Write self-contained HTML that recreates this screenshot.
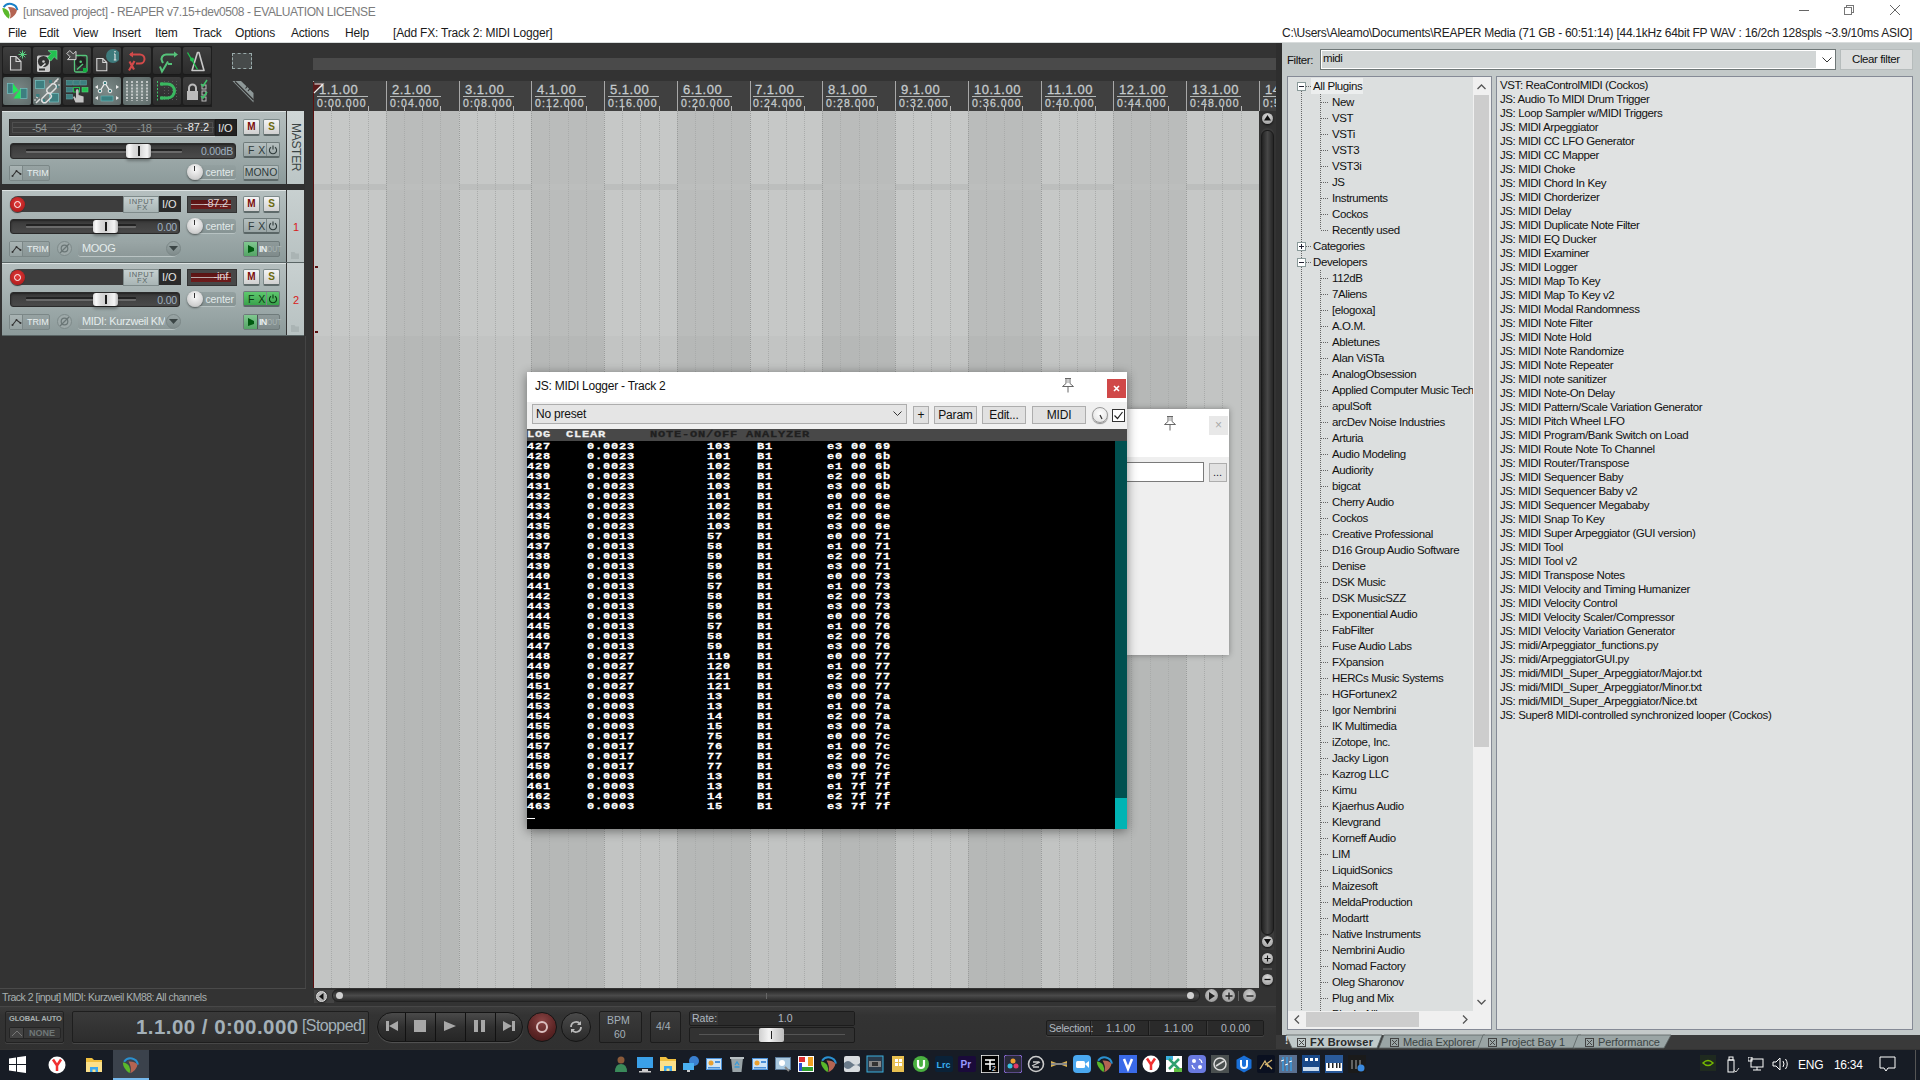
<!DOCTYPE html>
<html><head><meta charset="utf-8">
<style>
*{margin:0;padding:0;box-sizing:border-box}
html,body{width:1920px;height:1080px;overflow:hidden;background:#333;font-family:"Liberation Sans",sans-serif;position:relative}
div,span,svg{position:absolute}
.t{white-space:nowrap;line-height:1}

</style></head><body>
<div style="left:0;top:0;width:1920px;height:43px;background:#fff"></div><div style="left:0;top:42px;width:1920px;height:1px;background:#d8dcdc"></div><svg style="left:0;top:0" width="22" height="22" viewBox="0 0 22 22">
<path d="M3.6 7.2 A7.6 7.6 0 0 1 17.4 10.2" stroke="#1a80c8" stroke-width="2" fill="none"/>
<path d="M2.3 8 Q2.8 14.5 9 18.8 Q10.6 15 8.6 11.5 Q5.8 7.8 2.3 8 Z" fill="#5ab82a"/>
<path d="M8 7 Q14 6.6 17 10.2 Q16 15.5 9.8 18.8 Q11.8 13 8 7Z" fill="#b46452"/>
</svg><div class="t" style="left:23px;top:6px;font-size:12px;color:#7c7c7c;letter-spacing:-0.4px">[unsaved project] - REAPER v7.15+dev0508 - EVALUATION LICENSE</div><div style="left:1799px;top:10px;width:10px;height:1px;background:#666"></div><div style="left:1846px;top:5px;width:8px;height:8px;border:1px solid #777"></div><div style="left:1844px;top:7px;width:8px;height:8px;border:1px solid #777;background:#fff"></div><svg style="left:1890px;top:5px" width="10" height="10"><path d="M0 0L10 10M10 0L0 10" stroke="#666" stroke-width="1"/></svg><div class="t" style="left:8px;top:27px;font-size:12px;color:#1a1a1a;letter-spacing:-0.2px">File</div><div class="t" style="left:39px;top:27px;font-size:12px;color:#1a1a1a;letter-spacing:-0.2px">Edit</div><div class="t" style="left:73px;top:27px;font-size:12px;color:#1a1a1a;letter-spacing:-0.2px">View</div><div class="t" style="left:112px;top:27px;font-size:12px;color:#1a1a1a;letter-spacing:-0.2px">Insert</div><div class="t" style="left:155px;top:27px;font-size:12px;color:#1a1a1a;letter-spacing:-0.2px">Item</div><div class="t" style="left:193px;top:27px;font-size:12px;color:#1a1a1a;letter-spacing:-0.2px">Track</div><div class="t" style="left:235px;top:27px;font-size:12px;color:#1a1a1a;letter-spacing:-0.2px">Options</div><div class="t" style="left:291px;top:27px;font-size:12px;color:#1a1a1a;letter-spacing:-0.2px">Actions</div><div class="t" style="left:345px;top:27px;font-size:12px;color:#1a1a1a;letter-spacing:-0.2px">Help</div><div class="t" style="left:393px;top:27px;font-size:12px;color:#1a1a1a;letter-spacing:-0.2px">[Add FX: Track 2: MIDI Logger]</div><div class="t" style="left:1282px;top:27px;font-size:12px;color:#222;letter-spacing:-0.26px">C:\Users\Aleamo\Documents\REAPER Media (71 GB - 60:51:14) [44.1kHz 64bit FP WAV : 16/2ch 128spls ~3.9/10ms ASIO]</div><div style="left:2px;top:46px;width:210px;height:61px;background:#1e1e1e"></div><div style="left:3px;top:47px;width:28px;height:27px;background:linear-gradient(#3e3e3e,#2c2c2c);border-radius:2px;box-shadow:0 1px 0 #1a1a1a"><svg width="28" height="27"><path d="M7.5 9.5h5.5l5 5v8.5H7.5z" fill="#474747" stroke="#d4d4d4" stroke-width="1.1"/><path d="M13 9.5v5h5" fill="none" stroke="#d4d4d4" stroke-width="1.1"/><g stroke="#5ad080" stroke-width="1"><path d="M19.5 3.5v8M15.5 7.5h8M16.7 4.7l5.6 5.6M22.3 4.7l-5.6 5.6"/></g><circle cx="19.5" cy="7.5" r="1.5" fill="#5ad080"/></svg></div><div style="left:33px;top:47px;width:28px;height:27px;background:linear-gradient(#3e3e3e,#2c2c2c);border-radius:2px;box-shadow:0 1px 0 #1a1a1a"><svg width="28" height="27"><rect x="4" y="8.5" width="13" height="16.5" rx="1.5" fill="#c8c8c8"/><circle cx="10.5" cy="14.5" r="5.6" fill="#333"/><circle cx="10.5" cy="14.5" r="1.3" fill="#ccc"/><path d="M6.5 22l6-5.5" stroke="#ddd" stroke-width="1.6"/><rect x="6" y="21.5" width="6" height="2" fill="#333"/><path d="M15 3.5H24V12.5L21.3 9.8L17.8 14L14.3 10.8L18.2 6.3Z" fill="#22c050" stroke="#7ad89a" stroke-width=".6"/></svg></div><div style="left:63px;top:47px;width:28px;height:27px;background:linear-gradient(#3e3e3e,#2c2c2c);border-radius:2px;box-shadow:0 1px 0 #1a1a1a"><svg width="28" height="27"><rect x="11.5" y="8.5" width="12.5" height="16.5" rx="1.5" fill="#333" stroke="#55c57a" stroke-width="1.3"/><circle cx="17.7" cy="14.8" r="5.3" fill="#222"/><circle cx="17.7" cy="14.8" r="1.3" fill="#55c57a"/><path d="M14 22.5l6-5.5" stroke="#55c57a" stroke-width="1.4"/><path d="M20 21h4v4h-4z" fill="#12b040"/><path d="M13 4.3V12.6H4.5L7.2 9.9L3.8 6.5L6.8 3.5L10.2 6.9Z" fill="#4a4a4a" stroke="#d0d0d0" stroke-width="1"/></svg></div><div style="left:93px;top:47px;width:28px;height:27px;background:linear-gradient(#3e3e3e,#2c2c2c);border-radius:2px;box-shadow:0 1px 0 #1a1a1a"><svg width="28" height="27"><defs><clipPath id="ci"><rect x="0" y="2" width="26" height="25"/></clipPath></defs><circle cx="20" cy="9" r="7" fill="#3e7a7c" clip-path="url(#ci)"/><path d="M22 7v6M20.8 13h2.6M21 7h1" stroke="#e8e8e8" stroke-width="1.1"/><circle cx="22" cy="4.8" r=".8" fill="#e8e8e8"/><path d="M3.8 11.5h6l4 4v8.2H3.8z" fill="#474747" stroke="#d4d4d4" stroke-width="1.1"/><path d="M9.8 11.5v4h4" fill="none" stroke="#d4d4d4" stroke-width="1.1"/></svg></div><div style="left:123px;top:47px;width:28px;height:27px;background:linear-gradient(#3e3e3e,#2c2c2c);border-radius:2px;box-shadow:0 1px 0 #1a1a1a"><svg width="28" height="27"><path d="M7 7.5h10a4.5 4.5 0 0 1 0 9h-4" stroke="#d24a4a" stroke-width="2" fill="none"/><path d="M10 4.5L6 7.5L10 10.5z" fill="#d24a4a"/><path d="M6 23.5l5.5-9.5M6.5 14.5l4.5 8" stroke="#d24a4a" stroke-width="2.2"/></svg></div><div style="left:153px;top:47px;width:28px;height:27px;background:linear-gradient(#3e3e3e,#2c2c2c);border-radius:2px;box-shadow:0 1px 0 #1a1a1a"><svg width="28" height="27"><path d="M22 7.5H13a4.5 4.5 0 0 0-4 6.5l1 2" stroke="#55c27a" stroke-width="2" fill="none"/><path d="M21 4.5L25 7.5L21 10.5z" fill="#55c27a"/><path d="M7 19.5l2 5 6-10M15 17h4" stroke="#55c27a" stroke-width="2" fill="none"/></svg></div><div style="left:183px;top:47px;width:28px;height:27px;background:linear-gradient(#3e3e3e,#2c2c2c);border-radius:2px;box-shadow:0 1px 0 #1a1a1a"><svg width="28" height="27"><path d="M14.5 5.5h1.5l5 18h-12z" fill="none" stroke="#c8c8c8" stroke-width="1.6" stroke-linejoin="round"/><path d="M4.5 5.5l10 17" stroke="#22c050" stroke-width="1.3"/><circle cx="9" cy="12.5" r="2" fill="#22c050"/></svg></div><div style="left:3px;top:77px;width:28px;height:28px;background:radial-gradient(#7c8a88,#5f6b6a);border-radius:2px;box-shadow:0 1px 0 #1a1a1a"><svg width="28" height="28"><rect x="4.5" y="6.5" width="5.5" height="10" fill="#3d7f80" stroke="#76c0c0" stroke-width=".7"/><rect x="17.5" y="11.5" width="6.5" height="10" fill="#3d7f80" stroke="#76c0c0" stroke-width=".7"/><path d="M10 6.5L15.5 13.5L10 16.5Z" fill="#22e858"/><path d="M17.5 11.5V21.5H10.5Z" fill="#22e858"/></svg></div><div style="left:33px;top:77px;width:28px;height:28px;background:radial-gradient(#7c8a88,#5f6b6a);border-radius:2px;box-shadow:0 1px 0 #1a1a1a"><svg width="28" height="28"><rect x="2.5" y="3.5" width="9" height="8" fill="#3d7f80" stroke="#76c0c0" stroke-width=".7"/><rect x="16.5" y="16.5" width="9" height="8.5" fill="#3d7f80" stroke="#76c0c0" stroke-width=".7"/><rect x="16" y="3" width="3" height="3" fill="#3d7f80"/><rect x="22" y="8" width="3.5" height="3" fill="#3d7f80"/><rect x="3" y="17" width="3.5" height="3" fill="#3d7f80"/><rect x="9" y="22" width="3" height="3" fill="#3d7f80"/><g fill="none" stroke="#e0e0e0" stroke-width="1.5"><path d="M9 21.5l5-5a3 3 0 0 1 4 4l-5 5a3 3 0 0 1-4-4z"/><path d="M14 12l5-5a3 3 0 0 1 4 4l-5 5a3 3 0 0 1-4-4z"/><path d="M3 26l4-4M21 6l4.5-4.5"/></g><path d="M3 20l2 1M23 3l1 2M1 23l2 0M25 8l2 0" stroke="#ddd"/></svg></div><div style="left:63px;top:77px;width:28px;height:28px;background:linear-gradient(#3e3e3e,#2c2c2c);border-radius:2px;box-shadow:0 1px 0 #1a1a1a"><svg width="28" height="28"><g fill="#3d7f80" stroke="#5aa0a0" stroke-width=".6"><rect x="3.5" y="3.5" width="6" height="4.5"/><rect x="10.5" y="3.5" width="6" height="4.5"/><rect x="17.5" y="3.5" width="6" height="4.5"/><rect x="3.5" y="10.5" width="6" height="4.5"/><rect x="3.5" y="17.5" width="6" height="4.5"/></g><rect x="10.5" y="10.5" width="6" height="4.5" fill="none" stroke="#22c050"/><rect x="19" y="10.5" width="6" height="4.5" fill="#22c050" stroke="#5ad080" stroke-width=".6"/><path d="M12.5 25.5l-2.5-5.5 1.5-.8 1.5 2.3V13.5a1.3 1.3 0 0 1 2.6 0V18l5 1.5V25.5z" fill="#c4c4c4"/></svg></div><div style="left:93px;top:77px;width:28px;height:28px;background:radial-gradient(#7c8a88,#5f6b6a);border-radius:2px;box-shadow:0 1px 0 #1a1a1a"><svg width="28" height="28"><path d="M7 14l5-8 5 8" stroke="#eee" fill="none" stroke-width="1.3"/><circle cx="7" cy="14" r="1.8" fill="#3d7f80" stroke="#eee"/><circle cx="12" cy="6" r="1.8" fill="#3d7f80" stroke="#eee"/><circle cx="17" cy="14" r="1.8" fill="#3d7f80" stroke="#eee"/><rect x="8" y="19" width="12" height="5" fill="#3d7f80" stroke="#6bb" stroke-width=".6"/><path d="M2 10l3-2v4zM26 10l-3-2v4zM2 21l3-2v4zM26 21l-3-2v4z" fill="#eee"/></svg></div><div style="left:123px;top:77px;width:28px;height:28px;background:radial-gradient(#7c8a88,#5f6b6a);border-radius:2px;box-shadow:0 1px 0 #1a1a1a"><svg width="28" height="28"><g stroke="#eee" stroke-width="1.3" stroke-dasharray="2 1.2"><path d="M4 4v20M9 4v20M14 4v20M19 4v20M24 4v20"/></g></svg></div><div style="left:153px;top:77px;width:28px;height:28px;background:linear-gradient(#3e3e3e,#2c2c2c);border-radius:2px;box-shadow:0 1px 0 #1a1a1a"><svg width="28" height="28"><g stroke="#5a5a5a" stroke-dasharray="1 2"><path d="M11.5 4v20M15.5 4v20M19.5 4v20M23.5 4v20"/></g><path d="M4.5 4v20" stroke="#3fc46a" stroke-dasharray="2 1.5"/><path d="M8 7h6.5a7 7 0 0 1 0 14H8" stroke="#3ab860" stroke-width="3" fill="none"/><path d="M7 5.5h3v3H7zM7 19.5h3v3H7z" fill="#3ab860"/></svg></div><div style="left:183px;top:77px;width:28px;height:28px;background:linear-gradient(#3e3e3e,#2c2c2c);border-radius:2px;box-shadow:0 1px 0 #1a1a1a"><svg width="28" height="28"><rect x="4" y="14" width="11" height="9" fill="#bbb"/><path d="M6 14v-3a3.5 3.5 0 0 1 7 0v3" stroke="#bbb" stroke-width="2" fill="none"/><rect x="19" y="8" width="4" height="4" fill="none" stroke="#bbb"/><rect x="19" y="14" width="4" height="4" fill="none" stroke="#bbb"/><rect x="19" y="20" width="4" height="4" fill="none" stroke="#bbb"/><path d="M18 7l2 2 4-6M18 19l2 2 4-6" stroke="#3fc46a" stroke-width="1.5" fill="none"/></svg></div><div style="left:232px;top:53px;width:20px;height:16px;background:#474b4b;border:1px dashed #9aa"></div><svg style="left:231px;top:80px" width="24" height="24"><path d="M1.5 1H10L22.5 13V22.5Z" fill="#8e9898"/><path d="M4 1.5L22.5 20" stroke="#333" stroke-width="1.4"/><path d="M16.5 6l-2 2.5M19 8.5l-2 2.5" stroke="#333" stroke-width="1.2"/></svg><div style="left:2px;top:111px;width:284px;height:73px;background:linear-gradient(#dde3e3 0,#dde3e3 1px,#b5bfbf 1px,#a2aeae 50%,#8c9a9a);"></div><div style="left:287px;top:111px;width:17px;height:73px;background:linear-gradient(#cfd6d6,#bcc6c6);"></div><div class="t" style="left:302px;top:123px;font-size:12px;color:#3a4444;transform:rotate(90deg);transform-origin:0 0;letter-spacing:-.3px">MASTER</div><div style="left:9px;top:119px;width:206px;height:17px;background:#3b3b3b;border:1px solid #2a2a2a;box-shadow:0 1px 0 #c8d0d0"></div><div style="left:12px;top:122px;width:201px;height:11px;background:transparent;border:1px solid #4e4e4e"></div><div style="left:13px;top:127px;width:201px;height:1px;background:#555;"></div><div class="t" style="left:32px;top:123px;font-size:11px;color:#8e9494;letter-spacing:-.5px">-54</div><div class="t" style="left:67px;top:123px;font-size:11px;color:#8e9494;letter-spacing:-.5px">-42</div><div class="t" style="left:102px;top:123px;font-size:11px;color:#8e9494;letter-spacing:-.5px">-30</div><div class="t" style="left:137px;top:123px;font-size:11px;color:#8e9494;letter-spacing:-.5px">-18</div><div class="t" style="left:173px;top:123px;font-size:11px;color:#8e9494;letter-spacing:-.5px">-6</div><div class="t" style="left:184px;top:122px;font-size:11px;color:#e8e8e8;">-87.2</div><div style="left:215px;top:119px;width:22px;height:17px;background:#222;border:1px solid #1a1a1a"></div><div class="t" style="left:218px;top:123px;font-size:11px;color:#e6e6e6;">I/O</div><div style="left:243px;top:119px;width:17px;height:17px;background:linear-gradient(#f4f4f4,#d0d0d0);border:1px solid #7d8a8a;border-bottom:2px solid #5e6a6a;border-radius:2px;color:#7a0c0c;font-size:10px;font-weight:bold;text-align:center;line-height:14px">M</div><div style="left:263px;top:119px;width:17px;height:17px;background:linear-gradient(#f4f4f4,#d0d0d0);border:1px solid #7d8a8a;border-bottom:2px solid #5e6a6a;border-radius:2px;color:#6b6a10;font-size:10px;font-weight:bold;text-align:center;line-height:14px">S</div><div style="left:10px;top:143px;width:226px;height:16px;background:linear-gradient(#3a3a3a,#4a4a4a);border:1px solid #2a2a2a;border-radius:3px;box-shadow:inset 0 1px 2px #222"></div><div style="left:26px;top:149px;width:156px;height:4px;background:#222;border-radius:1px;border-bottom:2px solid #6a6a6a"></div><div style="left:126px;top:144px;width:25px;height:14px;background:linear-gradient(90deg,#d8d8d8,#fafafa 12%,#dcdcdc 30%,#cfcfcf 50%,#e6e6e6 70%,#f4f4f4 85%,#b8b8b8);border-radius:3px;box-shadow:0 3px 3px rgba(0,0,0,.3)"></div><div style="left:138px;top:146px;width:2px;height:10px;background:#1a1a1a;"></div><div class="t" style="left:10px;top:146px;width:223px;text-align:right;font-size:10.5px;color:#9fb0c0;letter-spacing:-.2px">0.00dB</div><div style="left:243px;top:142px;width:37px;height:16px;background:linear-gradient(#b6c0c0,#9aa6a6);border:1px solid #6f7b7b;border-bottom:2px solid #5a6666;border-radius:2px"></div><div style="left:266px;top:143px;width:1px;height:13px;background:#7b8787;"></div><div class="t" style="left:248px;top:145px;font-size:10.5px;color:#2f3b3b;letter-spacing:.5px">F X</div><svg style="left:268px;top:145px" width="10" height="10"><path d="M3 2.2A3.6 3.6 0 1 0 7 2.2M5 0.5v4" stroke="#2f3b3b" fill="none" stroke-width="1.1"/></svg><div style="left:9px;top:165px;width:41px;height:16px;background:linear-gradient(#97a3a3,#8a9696);border:1px solid #7b8787;border-radius:2px"></div><div style="left:10px;top:166px;width:13px;height:14px;background:linear-gradient(#a9b4b4,#96a2a2);border-right:1px solid #7b8787"></div><svg style="left:11px;top:167px" width="11" height="11"><path d="M1.5 9l4-5 4 3" stroke="#333" fill="none" stroke-width="1.1"/><circle cx="1.5" cy="9" r="1" fill="#333"/><circle cx="5.5" cy="4" r="1" fill="#333"/><circle cx="9.5" cy="7" r="1" fill="#333"/></svg><div class="t" style="left:27px;top:169px;font-size:9px;color:#e8eeee;letter-spacing:-.1px">TRIM</div><div style="left:195px;top:165px;width:41px;height:15px;background:linear-gradient(#93a0a0,#879494);border-radius:3px;border-bottom:1px solid #b7c2c2"></div><div style="left:187px;top:164px;width:16px;height:16px;border-radius:50%;background:radial-gradient(circle at 50% 35%,#fafafa,#cfcfcf 70%,#a0a0a0);box-shadow:0 1px 2px rgba(0,0,0,.5)"></div><div style="left:194px;top:166px;width:1px;height:5px;background:#333;"></div><div class="t" style="left:187px;top:167px;width:47px;text-align:right;font-size:10.5px;color:#e2eaea;letter-spacing:-.1px">center</div><div style="left:243px;top:165px;width:36px;height:16px;background:linear-gradient(#b6c0c0,#9aa6a6);border:1px solid #7d8a8a;border-bottom:2px solid #5e6a6a;border-radius:2px;color:#2f3b3b;font-size:10.5px;font-weight:normal;text-align:center;line-height:13px">MONO</div><div style="left:0px;top:184px;width:305px;height:6px;background:#303030;"></div><div style="left:2px;top:190px;width:284px;height:72px;background:linear-gradient(#dde3e3 0,#dde3e3 1px,#b5bfbf 1px,#a2aeae 50%,#8c9a9a);"></div><div style="left:287px;top:190px;width:17px;height:72px;background:linear-gradient(#c8d0d0,#b8c2c2);"></div><div style="left:2px;top:262px;width:302px;height:1px;background:#5a6565;"></div><div style="left:10px;top:196px;width:171px;height:16px;background:#3d3d3d;border-radius:8px 0 0 8px"></div><div style="left:10px;top:197px;width:15px;height:15px;border-radius:50%;background:radial-gradient(circle at 50% 40%,#e23a3a,#a31414);box-shadow:0 1px 1px #333"></div><div style="left:14px;top:201px;width:7px;height:7px;border-radius:50%;border:1.5px solid #fff"></div><div style="left:123px;top:196px;width:36px;height:17px;background:linear-gradient(#c6d0d0,#a9b5b5);border:1px solid #7f8b8b"></div><div class="t" style="left:129px;top:198px;font-size:7.5px;color:#5b6767;letter-spacing:.6px">INPUT</div><div class="t" style="left:137px;top:204px;font-size:7.5px;color:#5b6767;letter-spacing:.6px">FX</div><div style="left:159px;top:196px;width:22px;height:16px;background:#2a2a2a;"></div><div class="t" style="left:162px;top:199px;font-size:11px;color:#e6e6e6;">I/O</div><div style="left:187px;top:196px;width:50px;height:17px;background:#474747;border:1px solid #333"></div><div style="left:191px;top:200px;width:40px;height:9px;background:linear-gradient(#5a1414,#6e1c1c);"></div><div style="left:191px;top:204px;width:40px;height:1px;background:#b8a8a8;"></div><div class="t" style="left:188px;top:198px;font-size:11px;color:#e0d0d0;width:40px;text-align:right;letter-spacing:-.2px">-87.2</div><div style="left:243px;top:196px;width:17px;height:17px;background:linear-gradient(#f4f4f4,#d0d0d0);border:1px solid #7d8a8a;border-bottom:2px solid #5e6a6a;border-radius:2px;color:#7a0c0c;font-size:10px;font-weight:bold;text-align:center;line-height:14px">M</div><div style="left:263px;top:196px;width:17px;height:17px;background:linear-gradient(#f4f4f4,#d0d0d0);border:1px solid #7d8a8a;border-bottom:2px solid #5e6a6a;border-radius:2px;color:#6b6a10;font-size:10px;font-weight:bold;text-align:center;line-height:14px">S</div><div style="left:10px;top:219px;width:170px;height:15px;background:linear-gradient(#3a3a3a,#4a4a4a);border:1px solid #2a2a2a;border-radius:3px;box-shadow:inset 0 1px 2px #222"></div><div style="left:26px;top:224px;width:110px;height:4px;background:#222;border-radius:1px;border-bottom:2px solid #6a6a6a"></div><div style="left:93px;top:220px;width:25px;height:13px;background:linear-gradient(90deg,#d8d8d8,#fafafa 12%,#dcdcdc 30%,#cfcfcf 50%,#e6e6e6 70%,#f4f4f4 85%,#b8b8b8);border-radius:3px;box-shadow:0 3px 3px rgba(0,0,0,.3)"></div><div style="left:105px;top:222px;width:2px;height:9px;background:#1a1a1a;"></div><div class="t" style="left:10px;top:222px;width:167px;text-align:right;font-size:10.5px;color:#9fb0c0;letter-spacing:-.2px">0.00</div><div style="left:195px;top:219px;width:41px;height:15px;background:linear-gradient(#93a0a0,#879494);border-radius:3px;border-bottom:1px solid #b7c2c2"></div><div style="left:187px;top:218px;width:16px;height:16px;border-radius:50%;background:radial-gradient(circle at 50% 35%,#fafafa,#cfcfcf 70%,#a0a0a0);box-shadow:0 1px 2px rgba(0,0,0,.5)"></div><div style="left:194px;top:220px;width:1px;height:5px;background:#333;"></div><div class="t" style="left:187px;top:221px;width:47px;text-align:right;font-size:10.5px;color:#e2eaea;letter-spacing:-.1px">center</div><div style="left:243px;top:218px;width:37px;height:16px;background:linear-gradient(#b6c0c0,#9aa6a6);border:1px solid #6f7b7b;border-bottom:2px solid #5a6666;border-radius:2px"></div><div style="left:266px;top:219px;width:1px;height:13px;background:#7b8787;"></div><div class="t" style="left:248px;top:221px;font-size:10.5px;color:#2f3b3b;letter-spacing:.5px">F X</div><svg style="left:268px;top:221px" width="10" height="10"><path d="M3 2.2A3.6 3.6 0 1 0 7 2.2M5 0.5v4" stroke="#2f3b3b" fill="none" stroke-width="1.1"/></svg><div style="left:9px;top:241px;width:41px;height:16px;background:linear-gradient(#97a3a3,#8a9696);border:1px solid #7b8787;border-radius:2px"></div><div style="left:10px;top:242px;width:13px;height:14px;background:linear-gradient(#a9b4b4,#96a2a2);border-right:1px solid #7b8787"></div><svg style="left:11px;top:243px" width="11" height="11"><path d="M1.5 9l4-5 4 3" stroke="#333" fill="none" stroke-width="1.1"/><circle cx="1.5" cy="9" r="1" fill="#333"/><circle cx="5.5" cy="4" r="1" fill="#333"/><circle cx="9.5" cy="7" r="1" fill="#333"/></svg><div class="t" style="left:27px;top:245px;font-size:9px;color:#e8eeee;letter-spacing:-.1px">TRIM</div><div style="left:57px;top:241px;width:15px;height:15px;border-radius:50%;border:1px solid #7d8989;background:#9ea9a9"></div><svg style="left:59px;top:243px" width="11" height="11"><circle cx="5.5" cy="5.5" r="3.3" stroke="#6a7676" fill="none" stroke-width="1.2"/><path d="M1 10L10 1" stroke="#6a7676" stroke-width="1.2"/></svg><div style="left:78px;top:241px;width:102px;height:16px;background:linear-gradient(#9aa6a6,#8c9898);border-radius:3px 8px 8px 3px;border-bottom:1px solid #b9c3c3;overflow:hidden"></div><div style="left:166px;top:241px;width:15px;height:15px;border-radius:50%;background:linear-gradient(#9aa6a6,#7f8b8b);border:1px solid #7b8787"></div><svg style="left:169px;top:246px" width="9" height="6"><path d="M0 0h9L4.5 5z" fill="#3b4545"/></svg><div class="t" style="left:82px;top:243px;width:83px;overflow:hidden;font-size:11px;color:#e4ecec;letter-spacing:-.35px">MOOG</div><div style="left:243px;top:241px;width:37px;height:16px;background:linear-gradient(#8e9a9a,#7f8b8b);border:1px solid #6f7b7b;border-radius:2px"></div><div style="left:244px;top:242px;width:14px;height:14px;background:linear-gradient(#80c890,#55a466);border-right:1px solid #4a5656"></div><svg style="left:248px;top:245px" width="7" height="9"><path d="M0 0L6 3L6 6L0 8z" fill="#005a10"/></svg><div class="t" style="left:259px;top:245px;font-size:9px;color:#e8eeee;font-weight:bold;letter-spacing:-.8px">IN</div><div class="t" style="left:267px;top:245px;font-size:8.5px;color:#a8b4b4;letter-spacing:.1px;transform:scaleX(.8);transform-origin:0 0">OUT</div><div class="t" style="left:293px;top:222px;font-size:11px;color:#d81a1a;">1</div><svg style="left:291px;top:252px" width="9" height="7"><path d="M0 0h3.5l1 1.5H8V7H0z" fill="#aab4b4"/></svg><div style="left:2px;top:263px;width:284px;height:72px;background:linear-gradient(#dde3e3 0,#dde3e3 1px,#b5bfbf 1px,#a2aeae 50%,#8c9a9a);"></div><div style="left:287px;top:263px;width:17px;height:72px;background:linear-gradient(#c8d0d0,#b8c2c2);"></div><div style="left:2px;top:335px;width:302px;height:1px;background:#5a6565;"></div><div style="left:10px;top:269px;width:171px;height:16px;background:#3d3d3d;border-radius:8px 0 0 8px"></div><div style="left:10px;top:270px;width:15px;height:15px;border-radius:50%;background:radial-gradient(circle at 50% 40%,#e23a3a,#a31414);box-shadow:0 1px 1px #333"></div><div style="left:14px;top:274px;width:7px;height:7px;border-radius:50%;border:1.5px solid #fff"></div><div style="left:123px;top:269px;width:36px;height:17px;background:linear-gradient(#c6d0d0,#a9b5b5);border:1px solid #7f8b8b"></div><div class="t" style="left:129px;top:271px;font-size:7.5px;color:#5b6767;letter-spacing:.6px">INPUT</div><div class="t" style="left:137px;top:277px;font-size:7.5px;color:#5b6767;letter-spacing:.6px">FX</div><div style="left:159px;top:269px;width:22px;height:16px;background:#2a2a2a;"></div><div class="t" style="left:162px;top:272px;font-size:11px;color:#e6e6e6;">I/O</div><div style="left:187px;top:269px;width:50px;height:17px;background:#474747;border:1px solid #333"></div><div style="left:191px;top:273px;width:40px;height:9px;background:linear-gradient(#5a1414,#6e1c1c);"></div><div style="left:191px;top:277px;width:40px;height:1px;background:#b8a8a8;"></div><div class="t" style="left:188px;top:271px;font-size:11px;color:#e0d0d0;width:40px;text-align:right;letter-spacing:-.2px">-inf</div><div style="left:243px;top:269px;width:17px;height:17px;background:linear-gradient(#f4f4f4,#d0d0d0);border:1px solid #7d8a8a;border-bottom:2px solid #5e6a6a;border-radius:2px;color:#7a0c0c;font-size:10px;font-weight:bold;text-align:center;line-height:14px">M</div><div style="left:263px;top:269px;width:17px;height:17px;background:linear-gradient(#f4f4f4,#d0d0d0);border:1px solid #7d8a8a;border-bottom:2px solid #5e6a6a;border-radius:2px;color:#6b6a10;font-size:10px;font-weight:bold;text-align:center;line-height:14px">S</div><div style="left:10px;top:292px;width:170px;height:15px;background:linear-gradient(#3a3a3a,#4a4a4a);border:1px solid #2a2a2a;border-radius:3px;box-shadow:inset 0 1px 2px #222"></div><div style="left:26px;top:297px;width:110px;height:4px;background:#222;border-radius:1px;border-bottom:2px solid #6a6a6a"></div><div style="left:93px;top:293px;width:25px;height:13px;background:linear-gradient(90deg,#d8d8d8,#fafafa 12%,#dcdcdc 30%,#cfcfcf 50%,#e6e6e6 70%,#f4f4f4 85%,#b8b8b8);border-radius:3px;box-shadow:0 3px 3px rgba(0,0,0,.3)"></div><div style="left:105px;top:295px;width:2px;height:9px;background:#1a1a1a;"></div><div class="t" style="left:10px;top:295px;width:167px;text-align:right;font-size:10.5px;color:#9fb0c0;letter-spacing:-.2px">0.00</div><div style="left:195px;top:292px;width:41px;height:15px;background:linear-gradient(#93a0a0,#879494);border-radius:3px;border-bottom:1px solid #b7c2c2"></div><div style="left:187px;top:291px;width:16px;height:16px;border-radius:50%;background:radial-gradient(circle at 50% 35%,#fafafa,#cfcfcf 70%,#a0a0a0);box-shadow:0 1px 2px rgba(0,0,0,.5)"></div><div style="left:194px;top:293px;width:1px;height:5px;background:#333;"></div><div class="t" style="left:187px;top:294px;width:47px;text-align:right;font-size:10.5px;color:#e2eaea;letter-spacing:-.1px">center</div><div style="left:243px;top:291px;width:37px;height:16px;background:linear-gradient(#5ec86e,#3aa24c);border:1px solid #6f7b7b;border-bottom:2px solid #5a6666;border-radius:2px"></div><div style="left:266px;top:292px;width:1px;height:13px;background:#7b8787;"></div><div class="t" style="left:248px;top:294px;font-size:10.5px;color:#0c3a14;letter-spacing:.5px">F X</div><svg style="left:268px;top:294px" width="10" height="10"><path d="M3 2.2A3.6 3.6 0 1 0 7 2.2M5 0.5v4" stroke="#0c3a14" fill="none" stroke-width="1.1"/></svg><div style="left:9px;top:314px;width:41px;height:16px;background:linear-gradient(#97a3a3,#8a9696);border:1px solid #7b8787;border-radius:2px"></div><div style="left:10px;top:315px;width:13px;height:14px;background:linear-gradient(#a9b4b4,#96a2a2);border-right:1px solid #7b8787"></div><svg style="left:11px;top:316px" width="11" height="11"><path d="M1.5 9l4-5 4 3" stroke="#333" fill="none" stroke-width="1.1"/><circle cx="1.5" cy="9" r="1" fill="#333"/><circle cx="5.5" cy="4" r="1" fill="#333"/><circle cx="9.5" cy="7" r="1" fill="#333"/></svg><div class="t" style="left:27px;top:318px;font-size:9px;color:#e8eeee;letter-spacing:-.1px">TRIM</div><div style="left:57px;top:314px;width:15px;height:15px;border-radius:50%;border:1px solid #7d8989;background:#9ea9a9"></div><svg style="left:59px;top:316px" width="11" height="11"><circle cx="5.5" cy="5.5" r="3.3" stroke="#6a7676" fill="none" stroke-width="1.2"/><path d="M1 10L10 1" stroke="#6a7676" stroke-width="1.2"/></svg><div style="left:78px;top:314px;width:102px;height:16px;background:linear-gradient(#9aa6a6,#8c9898);border-radius:3px 8px 8px 3px;border-bottom:1px solid #b9c3c3;overflow:hidden"></div><div style="left:166px;top:314px;width:15px;height:15px;border-radius:50%;background:linear-gradient(#9aa6a6,#7f8b8b);border:1px solid #7b8787"></div><svg style="left:169px;top:319px" width="9" height="6"><path d="M0 0h9L4.5 5z" fill="#3b4545"/></svg><div class="t" style="left:82px;top:316px;width:83px;overflow:hidden;font-size:11px;color:#e4ecec;letter-spacing:-.35px">MIDI: Kurzweil KM88: All channels</div><div style="left:243px;top:314px;width:37px;height:16px;background:linear-gradient(#8e9a9a,#7f8b8b);border:1px solid #6f7b7b;border-radius:2px"></div><div style="left:244px;top:315px;width:14px;height:14px;background:linear-gradient(#80c890,#55a466);border-right:1px solid #4a5656"></div><svg style="left:248px;top:318px" width="7" height="9"><path d="M0 0L6 3L6 6L0 8z" fill="#005a10"/></svg><div class="t" style="left:259px;top:318px;font-size:9px;color:#e8eeee;font-weight:bold;letter-spacing:-.8px">IN</div><div class="t" style="left:267px;top:318px;font-size:8.5px;color:#a8b4b4;letter-spacing:.1px;transform:scaleX(.8);transform-origin:0 0">OUT</div><div class="t" style="left:293px;top:295px;font-size:11px;color:#d81a1a;">2</div><svg style="left:291px;top:325px" width="9" height="7"><path d="M0 0h3.5l1 1.5H8V7H0z" fill="#aab4b4"/></svg><div style="left:0px;top:988px;width:306px;height:1px;background:#4a4a4a;"></div><div style="left:305px;top:336px;width:1px;height:652px;background:#444;"></div><div class="t" style="left:2px;top:992px;font-size:10.5px;color:#a8b0b0;letter-spacing:-.5px">Track 2 [input] MIDI: Kurzweil KM88: All channels</div><div style="left:313px;top:58px;width:963px;height:12px;background:#4a4a4a;"></div><div style="left:313px;top:81px;width:963px;height:30px;background:#404040;"></div><div style="left:314px;top:111px;width:945px;height:877px;background:#c6c8c7;"></div><div style="left:386px;top:111px;width:73px;height:877px;background:#babcbb;"></div><div style="left:531px;top:111px;width:73px;height:877px;background:#babcbb;"></div><div style="left:677px;top:111px;width:73px;height:877px;background:#babcbb;"></div><div style="left:822px;top:111px;width:73px;height:877px;background:#babcbb;"></div><div style="left:968px;top:111px;width:73px;height:877px;background:#babcbb;"></div><div style="left:1113px;top:111px;width:73px;height:877px;background:#babcbb;"></div><div style="left:1259px;top:111px;width:73px;height:877px;background:#babcbb;"></div><div style="left:314px;top:184px;width:945px;height:6px;background:#bcbebd;"></div><div style="left:314px;top:336px;width:945px;height:652px;background:rgba(0,0,0,0.02);"></div><svg style="left:0;top:0" width="1280" height="1000"><path d="M313.5 111V988" stroke="#9a9c9b" stroke-width="1" stroke-dasharray="1 1"/><path d="M331.5 111V988" stroke="#a9abaa" stroke-width="1" stroke-dasharray="1 1"/><path d="M349.5 111V988" stroke="#a9abaa" stroke-width="1" stroke-dasharray="1 1"/><path d="M368.5 111V988" stroke="#a9abaa" stroke-width="1" stroke-dasharray="1 1"/><path d="M386.5 111V988" stroke="#9a9c9b" stroke-width="1" stroke-dasharray="1 1"/><path d="M404.5 111V988" stroke="#a9abaa" stroke-width="1" stroke-dasharray="1 1"/><path d="M422.5 111V988" stroke="#a9abaa" stroke-width="1" stroke-dasharray="1 1"/><path d="M440.5 111V988" stroke="#a9abaa" stroke-width="1" stroke-dasharray="1 1"/><path d="M459.5 111V988" stroke="#9a9c9b" stroke-width="1" stroke-dasharray="1 1"/><path d="M477.5 111V988" stroke="#a9abaa" stroke-width="1" stroke-dasharray="1 1"/><path d="M495.5 111V988" stroke="#a9abaa" stroke-width="1" stroke-dasharray="1 1"/><path d="M513.5 111V988" stroke="#a9abaa" stroke-width="1" stroke-dasharray="1 1"/><path d="M531.5 111V988" stroke="#9a9c9b" stroke-width="1" stroke-dasharray="1 1"/><path d="M549.5 111V988" stroke="#a9abaa" stroke-width="1" stroke-dasharray="1 1"/><path d="M568.5 111V988" stroke="#a9abaa" stroke-width="1" stroke-dasharray="1 1"/><path d="M586.5 111V988" stroke="#a9abaa" stroke-width="1" stroke-dasharray="1 1"/><path d="M604.5 111V988" stroke="#9a9c9b" stroke-width="1" stroke-dasharray="1 1"/><path d="M622.5 111V988" stroke="#a9abaa" stroke-width="1" stroke-dasharray="1 1"/><path d="M640.5 111V988" stroke="#a9abaa" stroke-width="1" stroke-dasharray="1 1"/><path d="M659.5 111V988" stroke="#a9abaa" stroke-width="1" stroke-dasharray="1 1"/><path d="M677.5 111V988" stroke="#9a9c9b" stroke-width="1" stroke-dasharray="1 1"/><path d="M695.5 111V988" stroke="#a9abaa" stroke-width="1" stroke-dasharray="1 1"/><path d="M713.5 111V988" stroke="#a9abaa" stroke-width="1" stroke-dasharray="1 1"/><path d="M731.5 111V988" stroke="#a9abaa" stroke-width="1" stroke-dasharray="1 1"/><path d="M750.5 111V988" stroke="#9a9c9b" stroke-width="1" stroke-dasharray="1 1"/><path d="M768.5 111V988" stroke="#a9abaa" stroke-width="1" stroke-dasharray="1 1"/><path d="M786.5 111V988" stroke="#a9abaa" stroke-width="1" stroke-dasharray="1 1"/><path d="M804.5 111V988" stroke="#a9abaa" stroke-width="1" stroke-dasharray="1 1"/><path d="M822.5 111V988" stroke="#9a9c9b" stroke-width="1" stroke-dasharray="1 1"/><path d="M840.5 111V988" stroke="#a9abaa" stroke-width="1" stroke-dasharray="1 1"/><path d="M859.5 111V988" stroke="#a9abaa" stroke-width="1" stroke-dasharray="1 1"/><path d="M877.5 111V988" stroke="#a9abaa" stroke-width="1" stroke-dasharray="1 1"/><path d="M895.5 111V988" stroke="#9a9c9b" stroke-width="1" stroke-dasharray="1 1"/><path d="M913.5 111V988" stroke="#a9abaa" stroke-width="1" stroke-dasharray="1 1"/><path d="M931.5 111V988" stroke="#a9abaa" stroke-width="1" stroke-dasharray="1 1"/><path d="M950.5 111V988" stroke="#a9abaa" stroke-width="1" stroke-dasharray="1 1"/><path d="M968.5 111V988" stroke="#9a9c9b" stroke-width="1" stroke-dasharray="1 1"/><path d="M986.5 111V988" stroke="#a9abaa" stroke-width="1" stroke-dasharray="1 1"/><path d="M1004.5 111V988" stroke="#a9abaa" stroke-width="1" stroke-dasharray="1 1"/><path d="M1022.5 111V988" stroke="#a9abaa" stroke-width="1" stroke-dasharray="1 1"/><path d="M1041.5 111V988" stroke="#9a9c9b" stroke-width="1" stroke-dasharray="1 1"/><path d="M1059.5 111V988" stroke="#a9abaa" stroke-width="1" stroke-dasharray="1 1"/><path d="M1077.5 111V988" stroke="#a9abaa" stroke-width="1" stroke-dasharray="1 1"/><path d="M1095.5 111V988" stroke="#a9abaa" stroke-width="1" stroke-dasharray="1 1"/><path d="M1113.5 111V988" stroke="#9a9c9b" stroke-width="1" stroke-dasharray="1 1"/><path d="M1131.5 111V988" stroke="#a9abaa" stroke-width="1" stroke-dasharray="1 1"/><path d="M1150.5 111V988" stroke="#a9abaa" stroke-width="1" stroke-dasharray="1 1"/><path d="M1168.5 111V988" stroke="#a9abaa" stroke-width="1" stroke-dasharray="1 1"/><path d="M1186.5 111V988" stroke="#9a9c9b" stroke-width="1" stroke-dasharray="1 1"/><path d="M1204.5 111V988" stroke="#a9abaa" stroke-width="1" stroke-dasharray="1 1"/><path d="M1222.5 111V988" stroke="#a9abaa" stroke-width="1" stroke-dasharray="1 1"/><path d="M1241.5 111V988" stroke="#a9abaa" stroke-width="1" stroke-dasharray="1 1"/><path d="M1259.5 111V988" stroke="#9a9c9b" stroke-width="1" stroke-dasharray="1 1"/></svg><svg style="left:0;top:0" width="1280" height="120"><path d="M313.5 81V111" stroke="#a8a8a8"/><path d="M331.5 106V111" stroke="#b8b8b8"/><path d="M349.5 106V111" stroke="#b8b8b8"/><path d="M368.5 106V111" stroke="#b8b8b8"/><path d="M386.5 81V111" stroke="#a8a8a8"/><path d="M404.5 106V111" stroke="#b8b8b8"/><path d="M422.5 106V111" stroke="#b8b8b8"/><path d="M440.5 106V111" stroke="#b8b8b8"/><path d="M459.5 81V111" stroke="#a8a8a8"/><path d="M477.5 106V111" stroke="#b8b8b8"/><path d="M495.5 106V111" stroke="#b8b8b8"/><path d="M513.5 106V111" stroke="#b8b8b8"/><path d="M531.5 81V111" stroke="#a8a8a8"/><path d="M549.5 106V111" stroke="#b8b8b8"/><path d="M568.5 106V111" stroke="#b8b8b8"/><path d="M586.5 106V111" stroke="#b8b8b8"/><path d="M604.5 81V111" stroke="#a8a8a8"/><path d="M622.5 106V111" stroke="#b8b8b8"/><path d="M640.5 106V111" stroke="#b8b8b8"/><path d="M659.5 106V111" stroke="#b8b8b8"/><path d="M677.5 81V111" stroke="#a8a8a8"/><path d="M695.5 106V111" stroke="#b8b8b8"/><path d="M713.5 106V111" stroke="#b8b8b8"/><path d="M731.5 106V111" stroke="#b8b8b8"/><path d="M750.5 81V111" stroke="#a8a8a8"/><path d="M768.5 106V111" stroke="#b8b8b8"/><path d="M786.5 106V111" stroke="#b8b8b8"/><path d="M804.5 106V111" stroke="#b8b8b8"/><path d="M822.5 81V111" stroke="#a8a8a8"/><path d="M840.5 106V111" stroke="#b8b8b8"/><path d="M859.5 106V111" stroke="#b8b8b8"/><path d="M877.5 106V111" stroke="#b8b8b8"/><path d="M895.5 81V111" stroke="#a8a8a8"/><path d="M913.5 106V111" stroke="#b8b8b8"/><path d="M931.5 106V111" stroke="#b8b8b8"/><path d="M950.5 106V111" stroke="#b8b8b8"/><path d="M968.5 81V111" stroke="#a8a8a8"/><path d="M986.5 106V111" stroke="#b8b8b8"/><path d="M1004.5 106V111" stroke="#b8b8b8"/><path d="M1022.5 106V111" stroke="#b8b8b8"/><path d="M1041.5 81V111" stroke="#a8a8a8"/><path d="M1059.5 106V111" stroke="#b8b8b8"/><path d="M1077.5 106V111" stroke="#b8b8b8"/><path d="M1095.5 106V111" stroke="#b8b8b8"/><path d="M1113.5 81V111" stroke="#a8a8a8"/><path d="M1131.5 106V111" stroke="#b8b8b8"/><path d="M1150.5 106V111" stroke="#b8b8b8"/><path d="M1168.5 106V111" stroke="#b8b8b8"/><path d="M1186.5 81V111" stroke="#a8a8a8"/><path d="M1204.5 106V111" stroke="#b8b8b8"/><path d="M1222.5 106V111" stroke="#b8b8b8"/><path d="M1241.5 106V111" stroke="#b8b8b8"/><path d="M1259.5 81V111" stroke="#a8a8a8"/></svg><div style="left:314px;top:81px;width:73px;height:30px;overflow:hidden"><div class="t" style="left:5px;top:2px;font-size:13px;color:#c4cacc;letter-spacing:.5px;-webkit-text-stroke:.3px #c4cacc">1.1.00</div><div style="left:3px;top:15px;width:51px;height:1px;background:#b4b8b8"></div><div class="t" style="left:3px;top:17px;font-size:10.5px;color:#c4cacc;letter-spacing:1.1px;-webkit-text-stroke:.3px #c4cacc">0:00.000</div></div><div style="left:387px;top:81px;width:73px;height:30px;overflow:hidden"><div class="t" style="left:5px;top:2px;font-size:13px;color:#c4cacc;letter-spacing:.5px;-webkit-text-stroke:.3px #c4cacc">2.1.00</div><div style="left:3px;top:15px;width:51px;height:1px;background:#b4b8b8"></div><div class="t" style="left:3px;top:17px;font-size:10.5px;color:#c4cacc;letter-spacing:1.1px;-webkit-text-stroke:.3px #c4cacc">0:04.000</div></div><div style="left:460px;top:81px;width:73px;height:30px;overflow:hidden"><div class="t" style="left:5px;top:2px;font-size:13px;color:#c4cacc;letter-spacing:.5px;-webkit-text-stroke:.3px #c4cacc">3.1.00</div><div style="left:3px;top:15px;width:51px;height:1px;background:#b4b8b8"></div><div class="t" style="left:3px;top:17px;font-size:10.5px;color:#c4cacc;letter-spacing:1.1px;-webkit-text-stroke:.3px #c4cacc">0:08.000</div></div><div style="left:532px;top:81px;width:73px;height:30px;overflow:hidden"><div class="t" style="left:5px;top:2px;font-size:13px;color:#c4cacc;letter-spacing:.5px;-webkit-text-stroke:.3px #c4cacc">4.1.00</div><div style="left:3px;top:15px;width:51px;height:1px;background:#b4b8b8"></div><div class="t" style="left:3px;top:17px;font-size:10.5px;color:#c4cacc;letter-spacing:1.1px;-webkit-text-stroke:.3px #c4cacc">0:12.000</div></div><div style="left:605px;top:81px;width:73px;height:30px;overflow:hidden"><div class="t" style="left:5px;top:2px;font-size:13px;color:#c4cacc;letter-spacing:.5px;-webkit-text-stroke:.3px #c4cacc">5.1.00</div><div style="left:3px;top:15px;width:51px;height:1px;background:#b4b8b8"></div><div class="t" style="left:3px;top:17px;font-size:10.5px;color:#c4cacc;letter-spacing:1.1px;-webkit-text-stroke:.3px #c4cacc">0:16.000</div></div><div style="left:678px;top:81px;width:73px;height:30px;overflow:hidden"><div class="t" style="left:5px;top:2px;font-size:13px;color:#c4cacc;letter-spacing:.5px;-webkit-text-stroke:.3px #c4cacc">6.1.00</div><div style="left:3px;top:15px;width:51px;height:1px;background:#b4b8b8"></div><div class="t" style="left:3px;top:17px;font-size:10.5px;color:#c4cacc;letter-spacing:1.1px;-webkit-text-stroke:.3px #c4cacc">0:20.000</div></div><div style="left:750px;top:81px;width:73px;height:30px;overflow:hidden"><div class="t" style="left:5px;top:2px;font-size:13px;color:#c4cacc;letter-spacing:.5px;-webkit-text-stroke:.3px #c4cacc">7.1.00</div><div style="left:3px;top:15px;width:51px;height:1px;background:#b4b8b8"></div><div class="t" style="left:3px;top:17px;font-size:10.5px;color:#c4cacc;letter-spacing:1.1px;-webkit-text-stroke:.3px #c4cacc">0:24.000</div></div><div style="left:823px;top:81px;width:73px;height:30px;overflow:hidden"><div class="t" style="left:5px;top:2px;font-size:13px;color:#c4cacc;letter-spacing:.5px;-webkit-text-stroke:.3px #c4cacc">8.1.00</div><div style="left:3px;top:15px;width:51px;height:1px;background:#b4b8b8"></div><div class="t" style="left:3px;top:17px;font-size:10.5px;color:#c4cacc;letter-spacing:1.1px;-webkit-text-stroke:.3px #c4cacc">0:28.000</div></div><div style="left:896px;top:81px;width:73px;height:30px;overflow:hidden"><div class="t" style="left:5px;top:2px;font-size:13px;color:#c4cacc;letter-spacing:.5px;-webkit-text-stroke:.3px #c4cacc">9.1.00</div><div style="left:3px;top:15px;width:51px;height:1px;background:#b4b8b8"></div><div class="t" style="left:3px;top:17px;font-size:10.5px;color:#c4cacc;letter-spacing:1.1px;-webkit-text-stroke:.3px #c4cacc">0:32.000</div></div><div style="left:969px;top:81px;width:73px;height:30px;overflow:hidden"><div class="t" style="left:5px;top:2px;font-size:13px;color:#c4cacc;letter-spacing:.5px;-webkit-text-stroke:.3px #c4cacc">10.1.00</div><div style="left:3px;top:15px;width:51px;height:1px;background:#b4b8b8"></div><div class="t" style="left:3px;top:17px;font-size:10.5px;color:#c4cacc;letter-spacing:1.1px;-webkit-text-stroke:.3px #c4cacc">0:36.000</div></div><div style="left:1042px;top:81px;width:73px;height:30px;overflow:hidden"><div class="t" style="left:5px;top:2px;font-size:13px;color:#c4cacc;letter-spacing:.5px;-webkit-text-stroke:.3px #c4cacc">11.1.00</div><div style="left:3px;top:15px;width:51px;height:1px;background:#b4b8b8"></div><div class="t" style="left:3px;top:17px;font-size:10.5px;color:#c4cacc;letter-spacing:1.1px;-webkit-text-stroke:.3px #c4cacc">0:40.000</div></div><div style="left:1114px;top:81px;width:73px;height:30px;overflow:hidden"><div class="t" style="left:5px;top:2px;font-size:13px;color:#c4cacc;letter-spacing:.5px;-webkit-text-stroke:.3px #c4cacc">12.1.00</div><div style="left:3px;top:15px;width:51px;height:1px;background:#b4b8b8"></div><div class="t" style="left:3px;top:17px;font-size:10.5px;color:#c4cacc;letter-spacing:1.1px;-webkit-text-stroke:.3px #c4cacc">0:44.000</div></div><div style="left:1187px;top:81px;width:73px;height:30px;overflow:hidden"><div class="t" style="left:5px;top:2px;font-size:13px;color:#c4cacc;letter-spacing:.5px;-webkit-text-stroke:.3px #c4cacc">13.1.00</div><div style="left:3px;top:15px;width:51px;height:1px;background:#b4b8b8"></div><div class="t" style="left:3px;top:17px;font-size:10.5px;color:#c4cacc;letter-spacing:1.1px;-webkit-text-stroke:.3px #c4cacc">0:48.000</div></div><div style="left:1260px;top:81px;width:16px;height:30px;overflow:hidden"><div class="t" style="left:5px;top:2px;font-size:13px;color:#c4cacc;letter-spacing:.5px;-webkit-text-stroke:.3px #c4cacc">14.1.00</div><div style="left:3px;top:15px;width:13px;height:1px;background:#b4b8b8"></div><div class="t" style="left:3px;top:17px;font-size:10.5px;color:#c4cacc;letter-spacing:1.1px;-webkit-text-stroke:.3px #c4cacc">0:52.000</div></div><div style="left:313px;top:82px;width:1px;height:906px;background:#5a1010;"></div><div style="left:315px;top:266px;width:3px;height:2px;background:#5a1010;"></div><div style="left:315px;top:331px;width:3px;height:2px;background:#5a1010;"></div><svg style="left:313px;top:82px" width="14" height="14"><path d="M0 1.5H10L0 11.5z" fill="#5a1a1a"/><path d="M1 11L10 2H1.5" stroke="#eee" fill="none" stroke-width="1.2"/></svg><div style="left:1259px;top:111px;width:17px;height:877px;background:#333;"></div><div style="left:1276px;top:43px;width:1px;height:962px;background:#454545;"></div><div style="left:1262px;top:113px;width:11px;height:11px;border-radius:50%;background:radial-gradient(circle at 50% 35%,#e0e0e0,#a8a8a8 70%,#8a8a8a);box-shadow:0 1px 2px #111"></div><svg style="left:1264px;top:115px" width="7" height="6"><path d="M0 5.5h7L3.5 0z" fill="#111"/></svg><div style="left:1261px;top:128px;width:13px;height:822px;background:#3b3b3b;border-radius:6px 6px 2px 2px"></div><div style="left:1261px;top:130px;width:13px;height:805px;border-radius:6px;background:linear-gradient(90deg,#222,#474747 50%,#262626);border:1px solid #1a1a1a"></div><div style="left:1262px;top:936px;width:11px;height:11px;border-radius:50%;background:radial-gradient(circle at 50% 35%,#e0e0e0,#a8a8a8 70%,#8a8a8a);box-shadow:0 1px 2px #111"></div><div style="left:1262px;top:953px;width:11px;height:11px;border-radius:50%;background:radial-gradient(circle at 50% 35%,#e0e0e0,#a8a8a8 70%,#8a8a8a);box-shadow:0 1px 2px #111"></div><div style="left:1262px;top:974px;width:11px;height:11px;border-radius:50%;background:radial-gradient(circle at 50% 35%,#e0e0e0,#a8a8a8 70%,#8a8a8a);box-shadow:0 1px 2px #111"></div><svg style="left:1264px;top:939px" width="7" height="6"><path d="M0 0h7L3.5 5.5z" fill="#111"/></svg><svg style="left:1263px;top:954px" width="9" height="9"><path d="M4.5 1.5v6M1.5 4.5h6" stroke="#111" stroke-width="1.2"/></svg><svg style="left:1263px;top:975px" width="9" height="9"><path d="M1.5 4.5h6" stroke="#111" stroke-width="1.3"/></svg><div style="left:1263px;top:968px;width:9px;height:2px;background:#555;"></div><div style="left:313px;top:988px;width:963px;height:17px;background:#333;"></div><div style="left:314px;top:990px;width:20px;height:13px;background:#444;"></div><div style="left:316px;top:991px;width:11px;height:11px;border-radius:50%;background:radial-gradient(circle at 50% 40%,#c8c8c8,#a0a0a0);border:1px solid #ddd;box-shadow:0 1px 2px #222"></div><svg style="left:319px;top:993px" width="5" height="7"><path d="M4.5 0v7L0 3.5z" fill="#111"/></svg><div style="left:332px;top:989px;width:868px;height:13px;border-radius:6px;background:linear-gradient(#262626,#4a4a4a 50%,#2a2a2a);border:1px solid #222"></div><div style="left:336px;top:992px;width:7px;height:7px;border-radius:50%;background:#d0d0d0"></div><div style="left:1187px;top:992px;width:7px;height:7px;border-radius:50%;background:#d0d0d0"></div><div style="left:766px;top:993px;width:1px;height:6px;background:#666;"></div><div style="left:1205px;top:989px;width:13px;height:13px;border-radius:50%;background:radial-gradient(circle at 50% 40%,#d0d0d0,#8a8a8a)"></div><div style="left:1222px;top:989px;width:13px;height:13px;border-radius:50%;background:radial-gradient(circle at 50% 40%,#d0d0d0,#8a8a8a)"></div><div style="left:1243px;top:989px;width:13px;height:13px;border-radius:50%;background:radial-gradient(circle at 50% 40%,#d0d0d0,#8a8a8a)"></div><svg style="left:1209px;top:992px" width="7" height="8"><path d="M0 0v8L6 4z" fill="#222"/></svg><svg style="left:1224px;top:991px" width="10" height="10"><path d="M5 1.5v7M1.5 5h7" stroke="#222" stroke-width="1.4"/></svg><svg style="left:1245px;top:991px" width="10" height="10"><path d="M1.5 5h7" stroke="#222" stroke-width="1.4"/></svg><div style="left:1238px;top:991px;width:1px;height:10px;background:#666;"></div><div style="left:1127px;top:409px;width:102px;height:246px;background:#efefef;box-shadow:0 0 6px rgba(0,0,0,.35)"></div><div style="left:1127px;top:409px;width:102px;height:48px;background:#fff;"></div><div style="left:1162px;top:415px"><svg width="16" height="16" viewBox="0 0 16 16"><path d="M5 1.5h6M6 1.5v5L2.5 9.5h11L10 6.5v-5M8 9.5v6" stroke="#666" fill="#fff" stroke-width="1"/><path d="M8 2v4" stroke="#999"/></svg></div><div style="left:1209px;top:416px;width:19px;height:19px;background:#e8e8e8;"></div><div class="t" style="left:1215px;top:419px;font-size:12px;color:#aaa;">×</div><div style="left:1127px;top:462px;width:77px;height:20px;background:#fff;border:1px solid #7a7a7a;border-left:none"></div><div style="left:1209px;top:463px;width:18px;height:19px;background:#e1e1e1;border:1px solid #adadad"></div><div class="t" style="left:1213px;top:467px;font-size:11px;color:#223;">...</div><div style="left:527px;top:372px;width:600px;height:457px;background:#f0f0f0;box-shadow:0 2px 10px rgba(0,0,0,.45)"></div><div style="left:527px;top:372px;width:600px;height:30px;background:#fff;"></div><div class="t" style="left:535px;top:380px;font-size:12px;color:#111;letter-spacing:-.25px">JS: MIDI Logger - Track 2</div><div style="left:1060px;top:377px"><svg width="16" height="16" viewBox="0 0 16 16"><path d="M5 1.5h6M6 1.5v5L2.5 9.5h11L10 6.5v-5M8 9.5v6" stroke="#666" fill="#fff" stroke-width="1"/><path d="M8 2v4" stroke="#999"/></svg></div><div style="left:1107px;top:379px;width:19px;height:19px;background:#d04848;"></div><svg style="left:1113px;top:385px" width="7" height="7"><path d="M1 1L6 6M6 1L1 6" stroke="#fff" stroke-width="1.6"/></svg><div style="left:532px;top:404px;width:375px;height:20px;background:#e5e5e5;border:1px solid #adadad"></div><div class="t" style="left:536px;top:408px;font-size:12px;color:#111;letter-spacing:-.2px">No preset</div><svg style="left:893px;top:411px" width="9" height="6"><path d="M0.5 0.5L4.5 4.5L8.5 0.5" stroke="#333" fill="none"/></svg><div style="left:913px;top:406px;width:16px;height:18px;background:#e1e1e1;border:1px solid #adadad;font-size:12px;color:#111;text-align:center;line-height:16px;letter-spacing:-.2px">+</div><div style="left:934px;top:406px;width:43px;height:18px;background:#e1e1e1;border:1px solid #adadad;font-size:12px;color:#111;text-align:center;line-height:16px;letter-spacing:-.2px">Param</div><div style="left:982px;top:406px;width:44px;height:18px;background:#e1e1e1;border:1px solid #adadad;font-size:12px;color:#111;text-align:center;line-height:16px;letter-spacing:-.2px">Edit...</div><div style="left:1032px;top:406px;width:54px;height:18px;background:#e1e1e1;border:1px solid #adadad;font-size:12px;color:#111;text-align:center;line-height:16px;letter-spacing:-.2px">MIDI</div><div style="left:1092px;top:407px;width:16px;height:16px;border-radius:50%;background:radial-gradient(circle at 50% 40%,#fff,#ddd);border:1px solid #999;box-shadow:0 1px 1px #888"></div><svg style="left:1099px;top:414px" width="6" height="6"><path d="M1 1L3 5" stroke="#333" stroke-width="1.2"/></svg><div style="left:1112px;top:409px;width:13px;height:13px;background:#fff;border:1px solid #333"></div><svg style="left:1113px;top:410px" width="11" height="11"><path d="M1.5 5.5l3 3 5-6.5" stroke="#222" fill="none" stroke-width="1.2"/></svg><div style="left:527px;top:429px;width:600px;height:12px;background:#484848;"></div><div style="left:527px;top:441px;width:588px;height:388px;background:#000;"></div><div style="left:1115px;top:441px;width:12px;height:357px;background:#005050;"></div><div style="left:1115px;top:798px;width:12px;height:31px;background:#00b4b4;"></div><div class="t" style="left:527px;top:430px;font-size:12px;color:#f0f0f0;font-family:'Liberation Mono',monospace;font-weight:bold;letter-spacing:.8px;transform:scaleY(.8);transform-origin:0 0;-webkit-text-stroke:.35px currentColor">LOG</div><div class="t" style="left:566px;top:430px;font-size:12px;color:#f0f0f0;font-family:'Liberation Mono',monospace;font-weight:bold;letter-spacing:.8px;transform:scaleY(.8);transform-origin:0 0;-webkit-text-stroke:.35px currentColor">CLEAR</div><div class="t" style="left:650px;top:430px;font-size:12px;color:#202020;font-family:'Liberation Mono',monospace;font-weight:bold;letter-spacing:.8px;transform:scaleY(.8);transform-origin:0 0;-webkit-text-stroke:.35px currentColor">NOTE-ON/OFF ANALYZER</div><div class="t" style="left:527px;top:442px;font-size:12px;color:#fff;font-family:'Liberation Mono',monospace;font-weight:bold;letter-spacing:.8px;transform:scaleY(.8);transform-origin:0 0;-webkit-text-stroke:.35px currentColor">427</div><div class="t" style="left:587px;top:442px;font-size:12px;color:#fff;font-family:'Liberation Mono',monospace;font-weight:bold;letter-spacing:.8px;transform:scaleY(.8);transform-origin:0 0;-webkit-text-stroke:.35px currentColor">0.0023</div><div class="t" style="left:707px;top:442px;font-size:12px;color:#fff;font-family:'Liberation Mono',monospace;font-weight:bold;letter-spacing:.8px;transform:scaleY(.8);transform-origin:0 0;-webkit-text-stroke:.35px currentColor">103</div><div class="t" style="left:757px;top:442px;font-size:12px;color:#fff;font-family:'Liberation Mono',monospace;font-weight:bold;letter-spacing:.8px;transform:scaleY(.8);transform-origin:0 0;-webkit-text-stroke:.35px currentColor">B1</div><div class="t" style="left:827px;top:442px;font-size:12px;color:#fff;font-family:'Liberation Mono',monospace;font-weight:bold;letter-spacing:.8px;transform:scaleY(.8);transform-origin:0 0;-webkit-text-stroke:.35px currentColor">e3</div><div class="t" style="left:851px;top:442px;font-size:12px;color:#fff;font-family:'Liberation Mono',monospace;font-weight:bold;letter-spacing:.8px;transform:scaleY(.8);transform-origin:0 0;-webkit-text-stroke:.35px currentColor">00</div><div class="t" style="left:875px;top:442px;font-size:12px;color:#fff;font-family:'Liberation Mono',monospace;font-weight:bold;letter-spacing:.8px;transform:scaleY(.8);transform-origin:0 0;-webkit-text-stroke:.35px currentColor">69</div><div class="t" style="left:527px;top:452px;font-size:12px;color:#fff;font-family:'Liberation Mono',monospace;font-weight:bold;letter-spacing:.8px;transform:scaleY(.8);transform-origin:0 0;-webkit-text-stroke:.35px currentColor">428</div><div class="t" style="left:587px;top:452px;font-size:12px;color:#fff;font-family:'Liberation Mono',monospace;font-weight:bold;letter-spacing:.8px;transform:scaleY(.8);transform-origin:0 0;-webkit-text-stroke:.35px currentColor">0.0023</div><div class="t" style="left:707px;top:452px;font-size:12px;color:#fff;font-family:'Liberation Mono',monospace;font-weight:bold;letter-spacing:.8px;transform:scaleY(.8);transform-origin:0 0;-webkit-text-stroke:.35px currentColor">101</div><div class="t" style="left:757px;top:452px;font-size:12px;color:#fff;font-family:'Liberation Mono',monospace;font-weight:bold;letter-spacing:.8px;transform:scaleY(.8);transform-origin:0 0;-webkit-text-stroke:.35px currentColor">B1</div><div class="t" style="left:827px;top:452px;font-size:12px;color:#fff;font-family:'Liberation Mono',monospace;font-weight:bold;letter-spacing:.8px;transform:scaleY(.8);transform-origin:0 0;-webkit-text-stroke:.35px currentColor">e0</div><div class="t" style="left:851px;top:452px;font-size:12px;color:#fff;font-family:'Liberation Mono',monospace;font-weight:bold;letter-spacing:.8px;transform:scaleY(.8);transform-origin:0 0;-webkit-text-stroke:.35px currentColor">00</div><div class="t" style="left:875px;top:452px;font-size:12px;color:#fff;font-family:'Liberation Mono',monospace;font-weight:bold;letter-spacing:.8px;transform:scaleY(.8);transform-origin:0 0;-webkit-text-stroke:.35px currentColor">6b</div><div class="t" style="left:527px;top:462px;font-size:12px;color:#fff;font-family:'Liberation Mono',monospace;font-weight:bold;letter-spacing:.8px;transform:scaleY(.8);transform-origin:0 0;-webkit-text-stroke:.35px currentColor">429</div><div class="t" style="left:587px;top:462px;font-size:12px;color:#fff;font-family:'Liberation Mono',monospace;font-weight:bold;letter-spacing:.8px;transform:scaleY(.8);transform-origin:0 0;-webkit-text-stroke:.35px currentColor">0.0023</div><div class="t" style="left:707px;top:462px;font-size:12px;color:#fff;font-family:'Liberation Mono',monospace;font-weight:bold;letter-spacing:.8px;transform:scaleY(.8);transform-origin:0 0;-webkit-text-stroke:.35px currentColor">102</div><div class="t" style="left:757px;top:462px;font-size:12px;color:#fff;font-family:'Liberation Mono',monospace;font-weight:bold;letter-spacing:.8px;transform:scaleY(.8);transform-origin:0 0;-webkit-text-stroke:.35px currentColor">B1</div><div class="t" style="left:827px;top:462px;font-size:12px;color:#fff;font-family:'Liberation Mono',monospace;font-weight:bold;letter-spacing:.8px;transform:scaleY(.8);transform-origin:0 0;-webkit-text-stroke:.35px currentColor">e1</div><div class="t" style="left:851px;top:462px;font-size:12px;color:#fff;font-family:'Liberation Mono',monospace;font-weight:bold;letter-spacing:.8px;transform:scaleY(.8);transform-origin:0 0;-webkit-text-stroke:.35px currentColor">00</div><div class="t" style="left:875px;top:462px;font-size:12px;color:#fff;font-family:'Liberation Mono',monospace;font-weight:bold;letter-spacing:.8px;transform:scaleY(.8);transform-origin:0 0;-webkit-text-stroke:.35px currentColor">6b</div><div class="t" style="left:527px;top:472px;font-size:12px;color:#fff;font-family:'Liberation Mono',monospace;font-weight:bold;letter-spacing:.8px;transform:scaleY(.8);transform-origin:0 0;-webkit-text-stroke:.35px currentColor">430</div><div class="t" style="left:587px;top:472px;font-size:12px;color:#fff;font-family:'Liberation Mono',monospace;font-weight:bold;letter-spacing:.8px;transform:scaleY(.8);transform-origin:0 0;-webkit-text-stroke:.35px currentColor">0.0023</div><div class="t" style="left:707px;top:472px;font-size:12px;color:#fff;font-family:'Liberation Mono',monospace;font-weight:bold;letter-spacing:.8px;transform:scaleY(.8);transform-origin:0 0;-webkit-text-stroke:.35px currentColor">102</div><div class="t" style="left:757px;top:472px;font-size:12px;color:#fff;font-family:'Liberation Mono',monospace;font-weight:bold;letter-spacing:.8px;transform:scaleY(.8);transform-origin:0 0;-webkit-text-stroke:.35px currentColor">B1</div><div class="t" style="left:827px;top:472px;font-size:12px;color:#fff;font-family:'Liberation Mono',monospace;font-weight:bold;letter-spacing:.8px;transform:scaleY(.8);transform-origin:0 0;-webkit-text-stroke:.35px currentColor">e2</div><div class="t" style="left:851px;top:472px;font-size:12px;color:#fff;font-family:'Liberation Mono',monospace;font-weight:bold;letter-spacing:.8px;transform:scaleY(.8);transform-origin:0 0;-webkit-text-stroke:.35px currentColor">00</div><div class="t" style="left:875px;top:472px;font-size:12px;color:#fff;font-family:'Liberation Mono',monospace;font-weight:bold;letter-spacing:.8px;transform:scaleY(.8);transform-origin:0 0;-webkit-text-stroke:.35px currentColor">6b</div><div class="t" style="left:527px;top:482px;font-size:12px;color:#fff;font-family:'Liberation Mono',monospace;font-weight:bold;letter-spacing:.8px;transform:scaleY(.8);transform-origin:0 0;-webkit-text-stroke:.35px currentColor">431</div><div class="t" style="left:587px;top:482px;font-size:12px;color:#fff;font-family:'Liberation Mono',monospace;font-weight:bold;letter-spacing:.8px;transform:scaleY(.8);transform-origin:0 0;-webkit-text-stroke:.35px currentColor">0.0023</div><div class="t" style="left:707px;top:482px;font-size:12px;color:#fff;font-family:'Liberation Mono',monospace;font-weight:bold;letter-spacing:.8px;transform:scaleY(.8);transform-origin:0 0;-webkit-text-stroke:.35px currentColor">103</div><div class="t" style="left:757px;top:482px;font-size:12px;color:#fff;font-family:'Liberation Mono',monospace;font-weight:bold;letter-spacing:.8px;transform:scaleY(.8);transform-origin:0 0;-webkit-text-stroke:.35px currentColor">B1</div><div class="t" style="left:827px;top:482px;font-size:12px;color:#fff;font-family:'Liberation Mono',monospace;font-weight:bold;letter-spacing:.8px;transform:scaleY(.8);transform-origin:0 0;-webkit-text-stroke:.35px currentColor">e3</div><div class="t" style="left:851px;top:482px;font-size:12px;color:#fff;font-family:'Liberation Mono',monospace;font-weight:bold;letter-spacing:.8px;transform:scaleY(.8);transform-origin:0 0;-webkit-text-stroke:.35px currentColor">00</div><div class="t" style="left:875px;top:482px;font-size:12px;color:#fff;font-family:'Liberation Mono',monospace;font-weight:bold;letter-spacing:.8px;transform:scaleY(.8);transform-origin:0 0;-webkit-text-stroke:.35px currentColor">6b</div><div class="t" style="left:527px;top:492px;font-size:12px;color:#fff;font-family:'Liberation Mono',monospace;font-weight:bold;letter-spacing:.8px;transform:scaleY(.8);transform-origin:0 0;-webkit-text-stroke:.35px currentColor">432</div><div class="t" style="left:587px;top:492px;font-size:12px;color:#fff;font-family:'Liberation Mono',monospace;font-weight:bold;letter-spacing:.8px;transform:scaleY(.8);transform-origin:0 0;-webkit-text-stroke:.35px currentColor">0.0023</div><div class="t" style="left:707px;top:492px;font-size:12px;color:#fff;font-family:'Liberation Mono',monospace;font-weight:bold;letter-spacing:.8px;transform:scaleY(.8);transform-origin:0 0;-webkit-text-stroke:.35px currentColor">101</div><div class="t" style="left:757px;top:492px;font-size:12px;color:#fff;font-family:'Liberation Mono',monospace;font-weight:bold;letter-spacing:.8px;transform:scaleY(.8);transform-origin:0 0;-webkit-text-stroke:.35px currentColor">B1</div><div class="t" style="left:827px;top:492px;font-size:12px;color:#fff;font-family:'Liberation Mono',monospace;font-weight:bold;letter-spacing:.8px;transform:scaleY(.8);transform-origin:0 0;-webkit-text-stroke:.35px currentColor">e0</div><div class="t" style="left:851px;top:492px;font-size:12px;color:#fff;font-family:'Liberation Mono',monospace;font-weight:bold;letter-spacing:.8px;transform:scaleY(.8);transform-origin:0 0;-webkit-text-stroke:.35px currentColor">00</div><div class="t" style="left:875px;top:492px;font-size:12px;color:#fff;font-family:'Liberation Mono',monospace;font-weight:bold;letter-spacing:.8px;transform:scaleY(.8);transform-origin:0 0;-webkit-text-stroke:.35px currentColor">6e</div><div class="t" style="left:527px;top:502px;font-size:12px;color:#fff;font-family:'Liberation Mono',monospace;font-weight:bold;letter-spacing:.8px;transform:scaleY(.8);transform-origin:0 0;-webkit-text-stroke:.35px currentColor">433</div><div class="t" style="left:587px;top:502px;font-size:12px;color:#fff;font-family:'Liberation Mono',monospace;font-weight:bold;letter-spacing:.8px;transform:scaleY(.8);transform-origin:0 0;-webkit-text-stroke:.35px currentColor">0.0023</div><div class="t" style="left:707px;top:502px;font-size:12px;color:#fff;font-family:'Liberation Mono',monospace;font-weight:bold;letter-spacing:.8px;transform:scaleY(.8);transform-origin:0 0;-webkit-text-stroke:.35px currentColor">102</div><div class="t" style="left:757px;top:502px;font-size:12px;color:#fff;font-family:'Liberation Mono',monospace;font-weight:bold;letter-spacing:.8px;transform:scaleY(.8);transform-origin:0 0;-webkit-text-stroke:.35px currentColor">B1</div><div class="t" style="left:827px;top:502px;font-size:12px;color:#fff;font-family:'Liberation Mono',monospace;font-weight:bold;letter-spacing:.8px;transform:scaleY(.8);transform-origin:0 0;-webkit-text-stroke:.35px currentColor">e1</div><div class="t" style="left:851px;top:502px;font-size:12px;color:#fff;font-family:'Liberation Mono',monospace;font-weight:bold;letter-spacing:.8px;transform:scaleY(.8);transform-origin:0 0;-webkit-text-stroke:.35px currentColor">00</div><div class="t" style="left:875px;top:502px;font-size:12px;color:#fff;font-family:'Liberation Mono',monospace;font-weight:bold;letter-spacing:.8px;transform:scaleY(.8);transform-origin:0 0;-webkit-text-stroke:.35px currentColor">6e</div><div class="t" style="left:527px;top:512px;font-size:12px;color:#fff;font-family:'Liberation Mono',monospace;font-weight:bold;letter-spacing:.8px;transform:scaleY(.8);transform-origin:0 0;-webkit-text-stroke:.35px currentColor">434</div><div class="t" style="left:587px;top:512px;font-size:12px;color:#fff;font-family:'Liberation Mono',monospace;font-weight:bold;letter-spacing:.8px;transform:scaleY(.8);transform-origin:0 0;-webkit-text-stroke:.35px currentColor">0.0023</div><div class="t" style="left:707px;top:512px;font-size:12px;color:#fff;font-family:'Liberation Mono',monospace;font-weight:bold;letter-spacing:.8px;transform:scaleY(.8);transform-origin:0 0;-webkit-text-stroke:.35px currentColor">102</div><div class="t" style="left:757px;top:512px;font-size:12px;color:#fff;font-family:'Liberation Mono',monospace;font-weight:bold;letter-spacing:.8px;transform:scaleY(.8);transform-origin:0 0;-webkit-text-stroke:.35px currentColor">B1</div><div class="t" style="left:827px;top:512px;font-size:12px;color:#fff;font-family:'Liberation Mono',monospace;font-weight:bold;letter-spacing:.8px;transform:scaleY(.8);transform-origin:0 0;-webkit-text-stroke:.35px currentColor">e2</div><div class="t" style="left:851px;top:512px;font-size:12px;color:#fff;font-family:'Liberation Mono',monospace;font-weight:bold;letter-spacing:.8px;transform:scaleY(.8);transform-origin:0 0;-webkit-text-stroke:.35px currentColor">00</div><div class="t" style="left:875px;top:512px;font-size:12px;color:#fff;font-family:'Liberation Mono',monospace;font-weight:bold;letter-spacing:.8px;transform:scaleY(.8);transform-origin:0 0;-webkit-text-stroke:.35px currentColor">6e</div><div class="t" style="left:527px;top:522px;font-size:12px;color:#fff;font-family:'Liberation Mono',monospace;font-weight:bold;letter-spacing:.8px;transform:scaleY(.8);transform-origin:0 0;-webkit-text-stroke:.35px currentColor">435</div><div class="t" style="left:587px;top:522px;font-size:12px;color:#fff;font-family:'Liberation Mono',monospace;font-weight:bold;letter-spacing:.8px;transform:scaleY(.8);transform-origin:0 0;-webkit-text-stroke:.35px currentColor">0.0023</div><div class="t" style="left:707px;top:522px;font-size:12px;color:#fff;font-family:'Liberation Mono',monospace;font-weight:bold;letter-spacing:.8px;transform:scaleY(.8);transform-origin:0 0;-webkit-text-stroke:.35px currentColor">103</div><div class="t" style="left:757px;top:522px;font-size:12px;color:#fff;font-family:'Liberation Mono',monospace;font-weight:bold;letter-spacing:.8px;transform:scaleY(.8);transform-origin:0 0;-webkit-text-stroke:.35px currentColor">B1</div><div class="t" style="left:827px;top:522px;font-size:12px;color:#fff;font-family:'Liberation Mono',monospace;font-weight:bold;letter-spacing:.8px;transform:scaleY(.8);transform-origin:0 0;-webkit-text-stroke:.35px currentColor">e3</div><div class="t" style="left:851px;top:522px;font-size:12px;color:#fff;font-family:'Liberation Mono',monospace;font-weight:bold;letter-spacing:.8px;transform:scaleY(.8);transform-origin:0 0;-webkit-text-stroke:.35px currentColor">00</div><div class="t" style="left:875px;top:522px;font-size:12px;color:#fff;font-family:'Liberation Mono',monospace;font-weight:bold;letter-spacing:.8px;transform:scaleY(.8);transform-origin:0 0;-webkit-text-stroke:.35px currentColor">6e</div><div class="t" style="left:527px;top:532px;font-size:12px;color:#fff;font-family:'Liberation Mono',monospace;font-weight:bold;letter-spacing:.8px;transform:scaleY(.8);transform-origin:0 0;-webkit-text-stroke:.35px currentColor">436</div><div class="t" style="left:587px;top:532px;font-size:12px;color:#fff;font-family:'Liberation Mono',monospace;font-weight:bold;letter-spacing:.8px;transform:scaleY(.8);transform-origin:0 0;-webkit-text-stroke:.35px currentColor">0.0013</div><div class="t" style="left:707px;top:532px;font-size:12px;color:#fff;font-family:'Liberation Mono',monospace;font-weight:bold;letter-spacing:.8px;transform:scaleY(.8);transform-origin:0 0;-webkit-text-stroke:.35px currentColor">57</div><div class="t" style="left:757px;top:532px;font-size:12px;color:#fff;font-family:'Liberation Mono',monospace;font-weight:bold;letter-spacing:.8px;transform:scaleY(.8);transform-origin:0 0;-webkit-text-stroke:.35px currentColor">B1</div><div class="t" style="left:827px;top:532px;font-size:12px;color:#fff;font-family:'Liberation Mono',monospace;font-weight:bold;letter-spacing:.8px;transform:scaleY(.8);transform-origin:0 0;-webkit-text-stroke:.35px currentColor">e0</div><div class="t" style="left:851px;top:532px;font-size:12px;color:#fff;font-family:'Liberation Mono',monospace;font-weight:bold;letter-spacing:.8px;transform:scaleY(.8);transform-origin:0 0;-webkit-text-stroke:.35px currentColor">00</div><div class="t" style="left:875px;top:532px;font-size:12px;color:#fff;font-family:'Liberation Mono',monospace;font-weight:bold;letter-spacing:.8px;transform:scaleY(.8);transform-origin:0 0;-webkit-text-stroke:.35px currentColor">71</div><div class="t" style="left:527px;top:542px;font-size:12px;color:#fff;font-family:'Liberation Mono',monospace;font-weight:bold;letter-spacing:.8px;transform:scaleY(.8);transform-origin:0 0;-webkit-text-stroke:.35px currentColor">437</div><div class="t" style="left:587px;top:542px;font-size:12px;color:#fff;font-family:'Liberation Mono',monospace;font-weight:bold;letter-spacing:.8px;transform:scaleY(.8);transform-origin:0 0;-webkit-text-stroke:.35px currentColor">0.0013</div><div class="t" style="left:707px;top:542px;font-size:12px;color:#fff;font-family:'Liberation Mono',monospace;font-weight:bold;letter-spacing:.8px;transform:scaleY(.8);transform-origin:0 0;-webkit-text-stroke:.35px currentColor">58</div><div class="t" style="left:757px;top:542px;font-size:12px;color:#fff;font-family:'Liberation Mono',monospace;font-weight:bold;letter-spacing:.8px;transform:scaleY(.8);transform-origin:0 0;-webkit-text-stroke:.35px currentColor">B1</div><div class="t" style="left:827px;top:542px;font-size:12px;color:#fff;font-family:'Liberation Mono',monospace;font-weight:bold;letter-spacing:.8px;transform:scaleY(.8);transform-origin:0 0;-webkit-text-stroke:.35px currentColor">e1</div><div class="t" style="left:851px;top:542px;font-size:12px;color:#fff;font-family:'Liberation Mono',monospace;font-weight:bold;letter-spacing:.8px;transform:scaleY(.8);transform-origin:0 0;-webkit-text-stroke:.35px currentColor">00</div><div class="t" style="left:875px;top:542px;font-size:12px;color:#fff;font-family:'Liberation Mono',monospace;font-weight:bold;letter-spacing:.8px;transform:scaleY(.8);transform-origin:0 0;-webkit-text-stroke:.35px currentColor">71</div><div class="t" style="left:527px;top:552px;font-size:12px;color:#fff;font-family:'Liberation Mono',monospace;font-weight:bold;letter-spacing:.8px;transform:scaleY(.8);transform-origin:0 0;-webkit-text-stroke:.35px currentColor">438</div><div class="t" style="left:587px;top:552px;font-size:12px;color:#fff;font-family:'Liberation Mono',monospace;font-weight:bold;letter-spacing:.8px;transform:scaleY(.8);transform-origin:0 0;-webkit-text-stroke:.35px currentColor">0.0013</div><div class="t" style="left:707px;top:552px;font-size:12px;color:#fff;font-family:'Liberation Mono',monospace;font-weight:bold;letter-spacing:.8px;transform:scaleY(.8);transform-origin:0 0;-webkit-text-stroke:.35px currentColor">59</div><div class="t" style="left:757px;top:552px;font-size:12px;color:#fff;font-family:'Liberation Mono',monospace;font-weight:bold;letter-spacing:.8px;transform:scaleY(.8);transform-origin:0 0;-webkit-text-stroke:.35px currentColor">B1</div><div class="t" style="left:827px;top:552px;font-size:12px;color:#fff;font-family:'Liberation Mono',monospace;font-weight:bold;letter-spacing:.8px;transform:scaleY(.8);transform-origin:0 0;-webkit-text-stroke:.35px currentColor">e2</div><div class="t" style="left:851px;top:552px;font-size:12px;color:#fff;font-family:'Liberation Mono',monospace;font-weight:bold;letter-spacing:.8px;transform:scaleY(.8);transform-origin:0 0;-webkit-text-stroke:.35px currentColor">00</div><div class="t" style="left:875px;top:552px;font-size:12px;color:#fff;font-family:'Liberation Mono',monospace;font-weight:bold;letter-spacing:.8px;transform:scaleY(.8);transform-origin:0 0;-webkit-text-stroke:.35px currentColor">71</div><div class="t" style="left:527px;top:562px;font-size:12px;color:#fff;font-family:'Liberation Mono',monospace;font-weight:bold;letter-spacing:.8px;transform:scaleY(.8);transform-origin:0 0;-webkit-text-stroke:.35px currentColor">439</div><div class="t" style="left:587px;top:562px;font-size:12px;color:#fff;font-family:'Liberation Mono',monospace;font-weight:bold;letter-spacing:.8px;transform:scaleY(.8);transform-origin:0 0;-webkit-text-stroke:.35px currentColor">0.0013</div><div class="t" style="left:707px;top:562px;font-size:12px;color:#fff;font-family:'Liberation Mono',monospace;font-weight:bold;letter-spacing:.8px;transform:scaleY(.8);transform-origin:0 0;-webkit-text-stroke:.35px currentColor">59</div><div class="t" style="left:757px;top:562px;font-size:12px;color:#fff;font-family:'Liberation Mono',monospace;font-weight:bold;letter-spacing:.8px;transform:scaleY(.8);transform-origin:0 0;-webkit-text-stroke:.35px currentColor">B1</div><div class="t" style="left:827px;top:562px;font-size:12px;color:#fff;font-family:'Liberation Mono',monospace;font-weight:bold;letter-spacing:.8px;transform:scaleY(.8);transform-origin:0 0;-webkit-text-stroke:.35px currentColor">e3</div><div class="t" style="left:851px;top:562px;font-size:12px;color:#fff;font-family:'Liberation Mono',monospace;font-weight:bold;letter-spacing:.8px;transform:scaleY(.8);transform-origin:0 0;-webkit-text-stroke:.35px currentColor">00</div><div class="t" style="left:875px;top:562px;font-size:12px;color:#fff;font-family:'Liberation Mono',monospace;font-weight:bold;letter-spacing:.8px;transform:scaleY(.8);transform-origin:0 0;-webkit-text-stroke:.35px currentColor">71</div><div class="t" style="left:527px;top:572px;font-size:12px;color:#fff;font-family:'Liberation Mono',monospace;font-weight:bold;letter-spacing:.8px;transform:scaleY(.8);transform-origin:0 0;-webkit-text-stroke:.35px currentColor">440</div><div class="t" style="left:587px;top:572px;font-size:12px;color:#fff;font-family:'Liberation Mono',monospace;font-weight:bold;letter-spacing:.8px;transform:scaleY(.8);transform-origin:0 0;-webkit-text-stroke:.35px currentColor">0.0013</div><div class="t" style="left:707px;top:572px;font-size:12px;color:#fff;font-family:'Liberation Mono',monospace;font-weight:bold;letter-spacing:.8px;transform:scaleY(.8);transform-origin:0 0;-webkit-text-stroke:.35px currentColor">56</div><div class="t" style="left:757px;top:572px;font-size:12px;color:#fff;font-family:'Liberation Mono',monospace;font-weight:bold;letter-spacing:.8px;transform:scaleY(.8);transform-origin:0 0;-webkit-text-stroke:.35px currentColor">B1</div><div class="t" style="left:827px;top:572px;font-size:12px;color:#fff;font-family:'Liberation Mono',monospace;font-weight:bold;letter-spacing:.8px;transform:scaleY(.8);transform-origin:0 0;-webkit-text-stroke:.35px currentColor">e0</div><div class="t" style="left:851px;top:572px;font-size:12px;color:#fff;font-family:'Liberation Mono',monospace;font-weight:bold;letter-spacing:.8px;transform:scaleY(.8);transform-origin:0 0;-webkit-text-stroke:.35px currentColor">00</div><div class="t" style="left:875px;top:572px;font-size:12px;color:#fff;font-family:'Liberation Mono',monospace;font-weight:bold;letter-spacing:.8px;transform:scaleY(.8);transform-origin:0 0;-webkit-text-stroke:.35px currentColor">73</div><div class="t" style="left:527px;top:582px;font-size:12px;color:#fff;font-family:'Liberation Mono',monospace;font-weight:bold;letter-spacing:.8px;transform:scaleY(.8);transform-origin:0 0;-webkit-text-stroke:.35px currentColor">441</div><div class="t" style="left:587px;top:582px;font-size:12px;color:#fff;font-family:'Liberation Mono',monospace;font-weight:bold;letter-spacing:.8px;transform:scaleY(.8);transform-origin:0 0;-webkit-text-stroke:.35px currentColor">0.0013</div><div class="t" style="left:707px;top:582px;font-size:12px;color:#fff;font-family:'Liberation Mono',monospace;font-weight:bold;letter-spacing:.8px;transform:scaleY(.8);transform-origin:0 0;-webkit-text-stroke:.35px currentColor">57</div><div class="t" style="left:757px;top:582px;font-size:12px;color:#fff;font-family:'Liberation Mono',monospace;font-weight:bold;letter-spacing:.8px;transform:scaleY(.8);transform-origin:0 0;-webkit-text-stroke:.35px currentColor">B1</div><div class="t" style="left:827px;top:582px;font-size:12px;color:#fff;font-family:'Liberation Mono',monospace;font-weight:bold;letter-spacing:.8px;transform:scaleY(.8);transform-origin:0 0;-webkit-text-stroke:.35px currentColor">e1</div><div class="t" style="left:851px;top:582px;font-size:12px;color:#fff;font-family:'Liberation Mono',monospace;font-weight:bold;letter-spacing:.8px;transform:scaleY(.8);transform-origin:0 0;-webkit-text-stroke:.35px currentColor">00</div><div class="t" style="left:875px;top:582px;font-size:12px;color:#fff;font-family:'Liberation Mono',monospace;font-weight:bold;letter-spacing:.8px;transform:scaleY(.8);transform-origin:0 0;-webkit-text-stroke:.35px currentColor">73</div><div class="t" style="left:527px;top:592px;font-size:12px;color:#fff;font-family:'Liberation Mono',monospace;font-weight:bold;letter-spacing:.8px;transform:scaleY(.8);transform-origin:0 0;-webkit-text-stroke:.35px currentColor">442</div><div class="t" style="left:587px;top:592px;font-size:12px;color:#fff;font-family:'Liberation Mono',monospace;font-weight:bold;letter-spacing:.8px;transform:scaleY(.8);transform-origin:0 0;-webkit-text-stroke:.35px currentColor">0.0013</div><div class="t" style="left:707px;top:592px;font-size:12px;color:#fff;font-family:'Liberation Mono',monospace;font-weight:bold;letter-spacing:.8px;transform:scaleY(.8);transform-origin:0 0;-webkit-text-stroke:.35px currentColor">58</div><div class="t" style="left:757px;top:592px;font-size:12px;color:#fff;font-family:'Liberation Mono',monospace;font-weight:bold;letter-spacing:.8px;transform:scaleY(.8);transform-origin:0 0;-webkit-text-stroke:.35px currentColor">B1</div><div class="t" style="left:827px;top:592px;font-size:12px;color:#fff;font-family:'Liberation Mono',monospace;font-weight:bold;letter-spacing:.8px;transform:scaleY(.8);transform-origin:0 0;-webkit-text-stroke:.35px currentColor">e2</div><div class="t" style="left:851px;top:592px;font-size:12px;color:#fff;font-family:'Liberation Mono',monospace;font-weight:bold;letter-spacing:.8px;transform:scaleY(.8);transform-origin:0 0;-webkit-text-stroke:.35px currentColor">00</div><div class="t" style="left:875px;top:592px;font-size:12px;color:#fff;font-family:'Liberation Mono',monospace;font-weight:bold;letter-spacing:.8px;transform:scaleY(.8);transform-origin:0 0;-webkit-text-stroke:.35px currentColor">73</div><div class="t" style="left:527px;top:602px;font-size:12px;color:#fff;font-family:'Liberation Mono',monospace;font-weight:bold;letter-spacing:.8px;transform:scaleY(.8);transform-origin:0 0;-webkit-text-stroke:.35px currentColor">443</div><div class="t" style="left:587px;top:602px;font-size:12px;color:#fff;font-family:'Liberation Mono',monospace;font-weight:bold;letter-spacing:.8px;transform:scaleY(.8);transform-origin:0 0;-webkit-text-stroke:.35px currentColor">0.0013</div><div class="t" style="left:707px;top:602px;font-size:12px;color:#fff;font-family:'Liberation Mono',monospace;font-weight:bold;letter-spacing:.8px;transform:scaleY(.8);transform-origin:0 0;-webkit-text-stroke:.35px currentColor">59</div><div class="t" style="left:757px;top:602px;font-size:12px;color:#fff;font-family:'Liberation Mono',monospace;font-weight:bold;letter-spacing:.8px;transform:scaleY(.8);transform-origin:0 0;-webkit-text-stroke:.35px currentColor">B1</div><div class="t" style="left:827px;top:602px;font-size:12px;color:#fff;font-family:'Liberation Mono',monospace;font-weight:bold;letter-spacing:.8px;transform:scaleY(.8);transform-origin:0 0;-webkit-text-stroke:.35px currentColor">e3</div><div class="t" style="left:851px;top:602px;font-size:12px;color:#fff;font-family:'Liberation Mono',monospace;font-weight:bold;letter-spacing:.8px;transform:scaleY(.8);transform-origin:0 0;-webkit-text-stroke:.35px currentColor">00</div><div class="t" style="left:875px;top:602px;font-size:12px;color:#fff;font-family:'Liberation Mono',monospace;font-weight:bold;letter-spacing:.8px;transform:scaleY(.8);transform-origin:0 0;-webkit-text-stroke:.35px currentColor">73</div><div class="t" style="left:527px;top:612px;font-size:12px;color:#fff;font-family:'Liberation Mono',monospace;font-weight:bold;letter-spacing:.8px;transform:scaleY(.8);transform-origin:0 0;-webkit-text-stroke:.35px currentColor">444</div><div class="t" style="left:587px;top:612px;font-size:12px;color:#fff;font-family:'Liberation Mono',monospace;font-weight:bold;letter-spacing:.8px;transform:scaleY(.8);transform-origin:0 0;-webkit-text-stroke:.35px currentColor">0.0013</div><div class="t" style="left:707px;top:612px;font-size:12px;color:#fff;font-family:'Liberation Mono',monospace;font-weight:bold;letter-spacing:.8px;transform:scaleY(.8);transform-origin:0 0;-webkit-text-stroke:.35px currentColor">56</div><div class="t" style="left:757px;top:612px;font-size:12px;color:#fff;font-family:'Liberation Mono',monospace;font-weight:bold;letter-spacing:.8px;transform:scaleY(.8);transform-origin:0 0;-webkit-text-stroke:.35px currentColor">B1</div><div class="t" style="left:827px;top:612px;font-size:12px;color:#fff;font-family:'Liberation Mono',monospace;font-weight:bold;letter-spacing:.8px;transform:scaleY(.8);transform-origin:0 0;-webkit-text-stroke:.35px currentColor">e0</div><div class="t" style="left:851px;top:612px;font-size:12px;color:#fff;font-family:'Liberation Mono',monospace;font-weight:bold;letter-spacing:.8px;transform:scaleY(.8);transform-origin:0 0;-webkit-text-stroke:.35px currentColor">00</div><div class="t" style="left:875px;top:612px;font-size:12px;color:#fff;font-family:'Liberation Mono',monospace;font-weight:bold;letter-spacing:.8px;transform:scaleY(.8);transform-origin:0 0;-webkit-text-stroke:.35px currentColor">76</div><div class="t" style="left:527px;top:622px;font-size:12px;color:#fff;font-family:'Liberation Mono',monospace;font-weight:bold;letter-spacing:.8px;transform:scaleY(.8);transform-origin:0 0;-webkit-text-stroke:.35px currentColor">445</div><div class="t" style="left:587px;top:622px;font-size:12px;color:#fff;font-family:'Liberation Mono',monospace;font-weight:bold;letter-spacing:.8px;transform:scaleY(.8);transform-origin:0 0;-webkit-text-stroke:.35px currentColor">0.0013</div><div class="t" style="left:707px;top:622px;font-size:12px;color:#fff;font-family:'Liberation Mono',monospace;font-weight:bold;letter-spacing:.8px;transform:scaleY(.8);transform-origin:0 0;-webkit-text-stroke:.35px currentColor">57</div><div class="t" style="left:757px;top:622px;font-size:12px;color:#fff;font-family:'Liberation Mono',monospace;font-weight:bold;letter-spacing:.8px;transform:scaleY(.8);transform-origin:0 0;-webkit-text-stroke:.35px currentColor">B1</div><div class="t" style="left:827px;top:622px;font-size:12px;color:#fff;font-family:'Liberation Mono',monospace;font-weight:bold;letter-spacing:.8px;transform:scaleY(.8);transform-origin:0 0;-webkit-text-stroke:.35px currentColor">e1</div><div class="t" style="left:851px;top:622px;font-size:12px;color:#fff;font-family:'Liberation Mono',monospace;font-weight:bold;letter-spacing:.8px;transform:scaleY(.8);transform-origin:0 0;-webkit-text-stroke:.35px currentColor">00</div><div class="t" style="left:875px;top:622px;font-size:12px;color:#fff;font-family:'Liberation Mono',monospace;font-weight:bold;letter-spacing:.8px;transform:scaleY(.8);transform-origin:0 0;-webkit-text-stroke:.35px currentColor">76</div><div class="t" style="left:527px;top:632px;font-size:12px;color:#fff;font-family:'Liberation Mono',monospace;font-weight:bold;letter-spacing:.8px;transform:scaleY(.8);transform-origin:0 0;-webkit-text-stroke:.35px currentColor">446</div><div class="t" style="left:587px;top:632px;font-size:12px;color:#fff;font-family:'Liberation Mono',monospace;font-weight:bold;letter-spacing:.8px;transform:scaleY(.8);transform-origin:0 0;-webkit-text-stroke:.35px currentColor">0.0013</div><div class="t" style="left:707px;top:632px;font-size:12px;color:#fff;font-family:'Liberation Mono',monospace;font-weight:bold;letter-spacing:.8px;transform:scaleY(.8);transform-origin:0 0;-webkit-text-stroke:.35px currentColor">58</div><div class="t" style="left:757px;top:632px;font-size:12px;color:#fff;font-family:'Liberation Mono',monospace;font-weight:bold;letter-spacing:.8px;transform:scaleY(.8);transform-origin:0 0;-webkit-text-stroke:.35px currentColor">B1</div><div class="t" style="left:827px;top:632px;font-size:12px;color:#fff;font-family:'Liberation Mono',monospace;font-weight:bold;letter-spacing:.8px;transform:scaleY(.8);transform-origin:0 0;-webkit-text-stroke:.35px currentColor">e2</div><div class="t" style="left:851px;top:632px;font-size:12px;color:#fff;font-family:'Liberation Mono',monospace;font-weight:bold;letter-spacing:.8px;transform:scaleY(.8);transform-origin:0 0;-webkit-text-stroke:.35px currentColor">00</div><div class="t" style="left:875px;top:632px;font-size:12px;color:#fff;font-family:'Liberation Mono',monospace;font-weight:bold;letter-spacing:.8px;transform:scaleY(.8);transform-origin:0 0;-webkit-text-stroke:.35px currentColor">76</div><div class="t" style="left:527px;top:642px;font-size:12px;color:#fff;font-family:'Liberation Mono',monospace;font-weight:bold;letter-spacing:.8px;transform:scaleY(.8);transform-origin:0 0;-webkit-text-stroke:.35px currentColor">447</div><div class="t" style="left:587px;top:642px;font-size:12px;color:#fff;font-family:'Liberation Mono',monospace;font-weight:bold;letter-spacing:.8px;transform:scaleY(.8);transform-origin:0 0;-webkit-text-stroke:.35px currentColor">0.0013</div><div class="t" style="left:707px;top:642px;font-size:12px;color:#fff;font-family:'Liberation Mono',monospace;font-weight:bold;letter-spacing:.8px;transform:scaleY(.8);transform-origin:0 0;-webkit-text-stroke:.35px currentColor">59</div><div class="t" style="left:757px;top:642px;font-size:12px;color:#fff;font-family:'Liberation Mono',monospace;font-weight:bold;letter-spacing:.8px;transform:scaleY(.8);transform-origin:0 0;-webkit-text-stroke:.35px currentColor">B1</div><div class="t" style="left:827px;top:642px;font-size:12px;color:#fff;font-family:'Liberation Mono',monospace;font-weight:bold;letter-spacing:.8px;transform:scaleY(.8);transform-origin:0 0;-webkit-text-stroke:.35px currentColor">e3</div><div class="t" style="left:851px;top:642px;font-size:12px;color:#fff;font-family:'Liberation Mono',monospace;font-weight:bold;letter-spacing:.8px;transform:scaleY(.8);transform-origin:0 0;-webkit-text-stroke:.35px currentColor">00</div><div class="t" style="left:875px;top:642px;font-size:12px;color:#fff;font-family:'Liberation Mono',monospace;font-weight:bold;letter-spacing:.8px;transform:scaleY(.8);transform-origin:0 0;-webkit-text-stroke:.35px currentColor">76</div><div class="t" style="left:527px;top:652px;font-size:12px;color:#fff;font-family:'Liberation Mono',monospace;font-weight:bold;letter-spacing:.8px;transform:scaleY(.8);transform-origin:0 0;-webkit-text-stroke:.35px currentColor">448</div><div class="t" style="left:587px;top:652px;font-size:12px;color:#fff;font-family:'Liberation Mono',monospace;font-weight:bold;letter-spacing:.8px;transform:scaleY(.8);transform-origin:0 0;-webkit-text-stroke:.35px currentColor">0.0027</div><div class="t" style="left:707px;top:652px;font-size:12px;color:#fff;font-family:'Liberation Mono',monospace;font-weight:bold;letter-spacing:.8px;transform:scaleY(.8);transform-origin:0 0;-webkit-text-stroke:.35px currentColor">119</div><div class="t" style="left:757px;top:652px;font-size:12px;color:#fff;font-family:'Liberation Mono',monospace;font-weight:bold;letter-spacing:.8px;transform:scaleY(.8);transform-origin:0 0;-webkit-text-stroke:.35px currentColor">B1</div><div class="t" style="left:827px;top:652px;font-size:12px;color:#fff;font-family:'Liberation Mono',monospace;font-weight:bold;letter-spacing:.8px;transform:scaleY(.8);transform-origin:0 0;-webkit-text-stroke:.35px currentColor">e0</div><div class="t" style="left:851px;top:652px;font-size:12px;color:#fff;font-family:'Liberation Mono',monospace;font-weight:bold;letter-spacing:.8px;transform:scaleY(.8);transform-origin:0 0;-webkit-text-stroke:.35px currentColor">00</div><div class="t" style="left:875px;top:652px;font-size:12px;color:#fff;font-family:'Liberation Mono',monospace;font-weight:bold;letter-spacing:.8px;transform:scaleY(.8);transform-origin:0 0;-webkit-text-stroke:.35px currentColor">77</div><div class="t" style="left:527px;top:662px;font-size:12px;color:#fff;font-family:'Liberation Mono',monospace;font-weight:bold;letter-spacing:.8px;transform:scaleY(.8);transform-origin:0 0;-webkit-text-stroke:.35px currentColor">449</div><div class="t" style="left:587px;top:662px;font-size:12px;color:#fff;font-family:'Liberation Mono',monospace;font-weight:bold;letter-spacing:.8px;transform:scaleY(.8);transform-origin:0 0;-webkit-text-stroke:.35px currentColor">0.0027</div><div class="t" style="left:707px;top:662px;font-size:12px;color:#fff;font-family:'Liberation Mono',monospace;font-weight:bold;letter-spacing:.8px;transform:scaleY(.8);transform-origin:0 0;-webkit-text-stroke:.35px currentColor">120</div><div class="t" style="left:757px;top:662px;font-size:12px;color:#fff;font-family:'Liberation Mono',monospace;font-weight:bold;letter-spacing:.8px;transform:scaleY(.8);transform-origin:0 0;-webkit-text-stroke:.35px currentColor">B1</div><div class="t" style="left:827px;top:662px;font-size:12px;color:#fff;font-family:'Liberation Mono',monospace;font-weight:bold;letter-spacing:.8px;transform:scaleY(.8);transform-origin:0 0;-webkit-text-stroke:.35px currentColor">e1</div><div class="t" style="left:851px;top:662px;font-size:12px;color:#fff;font-family:'Liberation Mono',monospace;font-weight:bold;letter-spacing:.8px;transform:scaleY(.8);transform-origin:0 0;-webkit-text-stroke:.35px currentColor">00</div><div class="t" style="left:875px;top:662px;font-size:12px;color:#fff;font-family:'Liberation Mono',monospace;font-weight:bold;letter-spacing:.8px;transform:scaleY(.8);transform-origin:0 0;-webkit-text-stroke:.35px currentColor">77</div><div class="t" style="left:527px;top:672px;font-size:12px;color:#fff;font-family:'Liberation Mono',monospace;font-weight:bold;letter-spacing:.8px;transform:scaleY(.8);transform-origin:0 0;-webkit-text-stroke:.35px currentColor">450</div><div class="t" style="left:587px;top:672px;font-size:12px;color:#fff;font-family:'Liberation Mono',monospace;font-weight:bold;letter-spacing:.8px;transform:scaleY(.8);transform-origin:0 0;-webkit-text-stroke:.35px currentColor">0.0027</div><div class="t" style="left:707px;top:672px;font-size:12px;color:#fff;font-family:'Liberation Mono',monospace;font-weight:bold;letter-spacing:.8px;transform:scaleY(.8);transform-origin:0 0;-webkit-text-stroke:.35px currentColor">121</div><div class="t" style="left:757px;top:672px;font-size:12px;color:#fff;font-family:'Liberation Mono',monospace;font-weight:bold;letter-spacing:.8px;transform:scaleY(.8);transform-origin:0 0;-webkit-text-stroke:.35px currentColor">B1</div><div class="t" style="left:827px;top:672px;font-size:12px;color:#fff;font-family:'Liberation Mono',monospace;font-weight:bold;letter-spacing:.8px;transform:scaleY(.8);transform-origin:0 0;-webkit-text-stroke:.35px currentColor">e2</div><div class="t" style="left:851px;top:672px;font-size:12px;color:#fff;font-family:'Liberation Mono',monospace;font-weight:bold;letter-spacing:.8px;transform:scaleY(.8);transform-origin:0 0;-webkit-text-stroke:.35px currentColor">00</div><div class="t" style="left:875px;top:672px;font-size:12px;color:#fff;font-family:'Liberation Mono',monospace;font-weight:bold;letter-spacing:.8px;transform:scaleY(.8);transform-origin:0 0;-webkit-text-stroke:.35px currentColor">77</div><div class="t" style="left:527px;top:682px;font-size:12px;color:#fff;font-family:'Liberation Mono',monospace;font-weight:bold;letter-spacing:.8px;transform:scaleY(.8);transform-origin:0 0;-webkit-text-stroke:.35px currentColor">451</div><div class="t" style="left:587px;top:682px;font-size:12px;color:#fff;font-family:'Liberation Mono',monospace;font-weight:bold;letter-spacing:.8px;transform:scaleY(.8);transform-origin:0 0;-webkit-text-stroke:.35px currentColor">0.0027</div><div class="t" style="left:707px;top:682px;font-size:12px;color:#fff;font-family:'Liberation Mono',monospace;font-weight:bold;letter-spacing:.8px;transform:scaleY(.8);transform-origin:0 0;-webkit-text-stroke:.35px currentColor">121</div><div class="t" style="left:757px;top:682px;font-size:12px;color:#fff;font-family:'Liberation Mono',monospace;font-weight:bold;letter-spacing:.8px;transform:scaleY(.8);transform-origin:0 0;-webkit-text-stroke:.35px currentColor">B1</div><div class="t" style="left:827px;top:682px;font-size:12px;color:#fff;font-family:'Liberation Mono',monospace;font-weight:bold;letter-spacing:.8px;transform:scaleY(.8);transform-origin:0 0;-webkit-text-stroke:.35px currentColor">e3</div><div class="t" style="left:851px;top:682px;font-size:12px;color:#fff;font-family:'Liberation Mono',monospace;font-weight:bold;letter-spacing:.8px;transform:scaleY(.8);transform-origin:0 0;-webkit-text-stroke:.35px currentColor">00</div><div class="t" style="left:875px;top:682px;font-size:12px;color:#fff;font-family:'Liberation Mono',monospace;font-weight:bold;letter-spacing:.8px;transform:scaleY(.8);transform-origin:0 0;-webkit-text-stroke:.35px currentColor">77</div><div class="t" style="left:527px;top:692px;font-size:12px;color:#fff;font-family:'Liberation Mono',monospace;font-weight:bold;letter-spacing:.8px;transform:scaleY(.8);transform-origin:0 0;-webkit-text-stroke:.35px currentColor">452</div><div class="t" style="left:587px;top:692px;font-size:12px;color:#fff;font-family:'Liberation Mono',monospace;font-weight:bold;letter-spacing:.8px;transform:scaleY(.8);transform-origin:0 0;-webkit-text-stroke:.35px currentColor">0.0003</div><div class="t" style="left:707px;top:692px;font-size:12px;color:#fff;font-family:'Liberation Mono',monospace;font-weight:bold;letter-spacing:.8px;transform:scaleY(.8);transform-origin:0 0;-webkit-text-stroke:.35px currentColor">13</div><div class="t" style="left:757px;top:692px;font-size:12px;color:#fff;font-family:'Liberation Mono',monospace;font-weight:bold;letter-spacing:.8px;transform:scaleY(.8);transform-origin:0 0;-webkit-text-stroke:.35px currentColor">B1</div><div class="t" style="left:827px;top:692px;font-size:12px;color:#fff;font-family:'Liberation Mono',monospace;font-weight:bold;letter-spacing:.8px;transform:scaleY(.8);transform-origin:0 0;-webkit-text-stroke:.35px currentColor">e0</div><div class="t" style="left:851px;top:692px;font-size:12px;color:#fff;font-family:'Liberation Mono',monospace;font-weight:bold;letter-spacing:.8px;transform:scaleY(.8);transform-origin:0 0;-webkit-text-stroke:.35px currentColor">00</div><div class="t" style="left:875px;top:692px;font-size:12px;color:#fff;font-family:'Liberation Mono',monospace;font-weight:bold;letter-spacing:.8px;transform:scaleY(.8);transform-origin:0 0;-webkit-text-stroke:.35px currentColor">7a</div><div class="t" style="left:527px;top:702px;font-size:12px;color:#fff;font-family:'Liberation Mono',monospace;font-weight:bold;letter-spacing:.8px;transform:scaleY(.8);transform-origin:0 0;-webkit-text-stroke:.35px currentColor">453</div><div class="t" style="left:587px;top:702px;font-size:12px;color:#fff;font-family:'Liberation Mono',monospace;font-weight:bold;letter-spacing:.8px;transform:scaleY(.8);transform-origin:0 0;-webkit-text-stroke:.35px currentColor">0.0003</div><div class="t" style="left:707px;top:702px;font-size:12px;color:#fff;font-family:'Liberation Mono',monospace;font-weight:bold;letter-spacing:.8px;transform:scaleY(.8);transform-origin:0 0;-webkit-text-stroke:.35px currentColor">13</div><div class="t" style="left:757px;top:702px;font-size:12px;color:#fff;font-family:'Liberation Mono',monospace;font-weight:bold;letter-spacing:.8px;transform:scaleY(.8);transform-origin:0 0;-webkit-text-stroke:.35px currentColor">B1</div><div class="t" style="left:827px;top:702px;font-size:12px;color:#fff;font-family:'Liberation Mono',monospace;font-weight:bold;letter-spacing:.8px;transform:scaleY(.8);transform-origin:0 0;-webkit-text-stroke:.35px currentColor">e1</div><div class="t" style="left:851px;top:702px;font-size:12px;color:#fff;font-family:'Liberation Mono',monospace;font-weight:bold;letter-spacing:.8px;transform:scaleY(.8);transform-origin:0 0;-webkit-text-stroke:.35px currentColor">00</div><div class="t" style="left:875px;top:702px;font-size:12px;color:#fff;font-family:'Liberation Mono',monospace;font-weight:bold;letter-spacing:.8px;transform:scaleY(.8);transform-origin:0 0;-webkit-text-stroke:.35px currentColor">7a</div><div class="t" style="left:527px;top:712px;font-size:12px;color:#fff;font-family:'Liberation Mono',monospace;font-weight:bold;letter-spacing:.8px;transform:scaleY(.8);transform-origin:0 0;-webkit-text-stroke:.35px currentColor">454</div><div class="t" style="left:587px;top:712px;font-size:12px;color:#fff;font-family:'Liberation Mono',monospace;font-weight:bold;letter-spacing:.8px;transform:scaleY(.8);transform-origin:0 0;-webkit-text-stroke:.35px currentColor">0.0003</div><div class="t" style="left:707px;top:712px;font-size:12px;color:#fff;font-family:'Liberation Mono',monospace;font-weight:bold;letter-spacing:.8px;transform:scaleY(.8);transform-origin:0 0;-webkit-text-stroke:.35px currentColor">14</div><div class="t" style="left:757px;top:712px;font-size:12px;color:#fff;font-family:'Liberation Mono',monospace;font-weight:bold;letter-spacing:.8px;transform:scaleY(.8);transform-origin:0 0;-webkit-text-stroke:.35px currentColor">B1</div><div class="t" style="left:827px;top:712px;font-size:12px;color:#fff;font-family:'Liberation Mono',monospace;font-weight:bold;letter-spacing:.8px;transform:scaleY(.8);transform-origin:0 0;-webkit-text-stroke:.35px currentColor">e2</div><div class="t" style="left:851px;top:712px;font-size:12px;color:#fff;font-family:'Liberation Mono',monospace;font-weight:bold;letter-spacing:.8px;transform:scaleY(.8);transform-origin:0 0;-webkit-text-stroke:.35px currentColor">00</div><div class="t" style="left:875px;top:712px;font-size:12px;color:#fff;font-family:'Liberation Mono',monospace;font-weight:bold;letter-spacing:.8px;transform:scaleY(.8);transform-origin:0 0;-webkit-text-stroke:.35px currentColor">7a</div><div class="t" style="left:527px;top:722px;font-size:12px;color:#fff;font-family:'Liberation Mono',monospace;font-weight:bold;letter-spacing:.8px;transform:scaleY(.8);transform-origin:0 0;-webkit-text-stroke:.35px currentColor">455</div><div class="t" style="left:587px;top:722px;font-size:12px;color:#fff;font-family:'Liberation Mono',monospace;font-weight:bold;letter-spacing:.8px;transform:scaleY(.8);transform-origin:0 0;-webkit-text-stroke:.35px currentColor">0.0003</div><div class="t" style="left:707px;top:722px;font-size:12px;color:#fff;font-family:'Liberation Mono',monospace;font-weight:bold;letter-spacing:.8px;transform:scaleY(.8);transform-origin:0 0;-webkit-text-stroke:.35px currentColor">15</div><div class="t" style="left:757px;top:722px;font-size:12px;color:#fff;font-family:'Liberation Mono',monospace;font-weight:bold;letter-spacing:.8px;transform:scaleY(.8);transform-origin:0 0;-webkit-text-stroke:.35px currentColor">B1</div><div class="t" style="left:827px;top:722px;font-size:12px;color:#fff;font-family:'Liberation Mono',monospace;font-weight:bold;letter-spacing:.8px;transform:scaleY(.8);transform-origin:0 0;-webkit-text-stroke:.35px currentColor">e3</div><div class="t" style="left:851px;top:722px;font-size:12px;color:#fff;font-family:'Liberation Mono',monospace;font-weight:bold;letter-spacing:.8px;transform:scaleY(.8);transform-origin:0 0;-webkit-text-stroke:.35px currentColor">00</div><div class="t" style="left:875px;top:722px;font-size:12px;color:#fff;font-family:'Liberation Mono',monospace;font-weight:bold;letter-spacing:.8px;transform:scaleY(.8);transform-origin:0 0;-webkit-text-stroke:.35px currentColor">7a</div><div class="t" style="left:527px;top:732px;font-size:12px;color:#fff;font-family:'Liberation Mono',monospace;font-weight:bold;letter-spacing:.8px;transform:scaleY(.8);transform-origin:0 0;-webkit-text-stroke:.35px currentColor">456</div><div class="t" style="left:587px;top:732px;font-size:12px;color:#fff;font-family:'Liberation Mono',monospace;font-weight:bold;letter-spacing:.8px;transform:scaleY(.8);transform-origin:0 0;-webkit-text-stroke:.35px currentColor">0.0017</div><div class="t" style="left:707px;top:732px;font-size:12px;color:#fff;font-family:'Liberation Mono',monospace;font-weight:bold;letter-spacing:.8px;transform:scaleY(.8);transform-origin:0 0;-webkit-text-stroke:.35px currentColor">75</div><div class="t" style="left:757px;top:732px;font-size:12px;color:#fff;font-family:'Liberation Mono',monospace;font-weight:bold;letter-spacing:.8px;transform:scaleY(.8);transform-origin:0 0;-webkit-text-stroke:.35px currentColor">B1</div><div class="t" style="left:827px;top:732px;font-size:12px;color:#fff;font-family:'Liberation Mono',monospace;font-weight:bold;letter-spacing:.8px;transform:scaleY(.8);transform-origin:0 0;-webkit-text-stroke:.35px currentColor">e0</div><div class="t" style="left:851px;top:732px;font-size:12px;color:#fff;font-family:'Liberation Mono',monospace;font-weight:bold;letter-spacing:.8px;transform:scaleY(.8);transform-origin:0 0;-webkit-text-stroke:.35px currentColor">00</div><div class="t" style="left:875px;top:732px;font-size:12px;color:#fff;font-family:'Liberation Mono',monospace;font-weight:bold;letter-spacing:.8px;transform:scaleY(.8);transform-origin:0 0;-webkit-text-stroke:.35px currentColor">7c</div><div class="t" style="left:527px;top:742px;font-size:12px;color:#fff;font-family:'Liberation Mono',monospace;font-weight:bold;letter-spacing:.8px;transform:scaleY(.8);transform-origin:0 0;-webkit-text-stroke:.35px currentColor">457</div><div class="t" style="left:587px;top:742px;font-size:12px;color:#fff;font-family:'Liberation Mono',monospace;font-weight:bold;letter-spacing:.8px;transform:scaleY(.8);transform-origin:0 0;-webkit-text-stroke:.35px currentColor">0.0017</div><div class="t" style="left:707px;top:742px;font-size:12px;color:#fff;font-family:'Liberation Mono',monospace;font-weight:bold;letter-spacing:.8px;transform:scaleY(.8);transform-origin:0 0;-webkit-text-stroke:.35px currentColor">76</div><div class="t" style="left:757px;top:742px;font-size:12px;color:#fff;font-family:'Liberation Mono',monospace;font-weight:bold;letter-spacing:.8px;transform:scaleY(.8);transform-origin:0 0;-webkit-text-stroke:.35px currentColor">B1</div><div class="t" style="left:827px;top:742px;font-size:12px;color:#fff;font-family:'Liberation Mono',monospace;font-weight:bold;letter-spacing:.8px;transform:scaleY(.8);transform-origin:0 0;-webkit-text-stroke:.35px currentColor">e1</div><div class="t" style="left:851px;top:742px;font-size:12px;color:#fff;font-family:'Liberation Mono',monospace;font-weight:bold;letter-spacing:.8px;transform:scaleY(.8);transform-origin:0 0;-webkit-text-stroke:.35px currentColor">00</div><div class="t" style="left:875px;top:742px;font-size:12px;color:#fff;font-family:'Liberation Mono',monospace;font-weight:bold;letter-spacing:.8px;transform:scaleY(.8);transform-origin:0 0;-webkit-text-stroke:.35px currentColor">7c</div><div class="t" style="left:527px;top:752px;font-size:12px;color:#fff;font-family:'Liberation Mono',monospace;font-weight:bold;letter-spacing:.8px;transform:scaleY(.8);transform-origin:0 0;-webkit-text-stroke:.35px currentColor">458</div><div class="t" style="left:587px;top:752px;font-size:12px;color:#fff;font-family:'Liberation Mono',monospace;font-weight:bold;letter-spacing:.8px;transform:scaleY(.8);transform-origin:0 0;-webkit-text-stroke:.35px currentColor">0.0017</div><div class="t" style="left:707px;top:752px;font-size:12px;color:#fff;font-family:'Liberation Mono',monospace;font-weight:bold;letter-spacing:.8px;transform:scaleY(.8);transform-origin:0 0;-webkit-text-stroke:.35px currentColor">77</div><div class="t" style="left:757px;top:752px;font-size:12px;color:#fff;font-family:'Liberation Mono',monospace;font-weight:bold;letter-spacing:.8px;transform:scaleY(.8);transform-origin:0 0;-webkit-text-stroke:.35px currentColor">B1</div><div class="t" style="left:827px;top:752px;font-size:12px;color:#fff;font-family:'Liberation Mono',monospace;font-weight:bold;letter-spacing:.8px;transform:scaleY(.8);transform-origin:0 0;-webkit-text-stroke:.35px currentColor">e2</div><div class="t" style="left:851px;top:752px;font-size:12px;color:#fff;font-family:'Liberation Mono',monospace;font-weight:bold;letter-spacing:.8px;transform:scaleY(.8);transform-origin:0 0;-webkit-text-stroke:.35px currentColor">00</div><div class="t" style="left:875px;top:752px;font-size:12px;color:#fff;font-family:'Liberation Mono',monospace;font-weight:bold;letter-spacing:.8px;transform:scaleY(.8);transform-origin:0 0;-webkit-text-stroke:.35px currentColor">7c</div><div class="t" style="left:527px;top:762px;font-size:12px;color:#fff;font-family:'Liberation Mono',monospace;font-weight:bold;letter-spacing:.8px;transform:scaleY(.8);transform-origin:0 0;-webkit-text-stroke:.35px currentColor">459</div><div class="t" style="left:587px;top:762px;font-size:12px;color:#fff;font-family:'Liberation Mono',monospace;font-weight:bold;letter-spacing:.8px;transform:scaleY(.8);transform-origin:0 0;-webkit-text-stroke:.35px currentColor">0.0017</div><div class="t" style="left:707px;top:762px;font-size:12px;color:#fff;font-family:'Liberation Mono',monospace;font-weight:bold;letter-spacing:.8px;transform:scaleY(.8);transform-origin:0 0;-webkit-text-stroke:.35px currentColor">77</div><div class="t" style="left:757px;top:762px;font-size:12px;color:#fff;font-family:'Liberation Mono',monospace;font-weight:bold;letter-spacing:.8px;transform:scaleY(.8);transform-origin:0 0;-webkit-text-stroke:.35px currentColor">B1</div><div class="t" style="left:827px;top:762px;font-size:12px;color:#fff;font-family:'Liberation Mono',monospace;font-weight:bold;letter-spacing:.8px;transform:scaleY(.8);transform-origin:0 0;-webkit-text-stroke:.35px currentColor">e3</div><div class="t" style="left:851px;top:762px;font-size:12px;color:#fff;font-family:'Liberation Mono',monospace;font-weight:bold;letter-spacing:.8px;transform:scaleY(.8);transform-origin:0 0;-webkit-text-stroke:.35px currentColor">00</div><div class="t" style="left:875px;top:762px;font-size:12px;color:#fff;font-family:'Liberation Mono',monospace;font-weight:bold;letter-spacing:.8px;transform:scaleY(.8);transform-origin:0 0;-webkit-text-stroke:.35px currentColor">7c</div><div class="t" style="left:527px;top:772px;font-size:12px;color:#fff;font-family:'Liberation Mono',monospace;font-weight:bold;letter-spacing:.8px;transform:scaleY(.8);transform-origin:0 0;-webkit-text-stroke:.35px currentColor">460</div><div class="t" style="left:587px;top:772px;font-size:12px;color:#fff;font-family:'Liberation Mono',monospace;font-weight:bold;letter-spacing:.8px;transform:scaleY(.8);transform-origin:0 0;-webkit-text-stroke:.35px currentColor">0.0003</div><div class="t" style="left:707px;top:772px;font-size:12px;color:#fff;font-family:'Liberation Mono',monospace;font-weight:bold;letter-spacing:.8px;transform:scaleY(.8);transform-origin:0 0;-webkit-text-stroke:.35px currentColor">13</div><div class="t" style="left:757px;top:772px;font-size:12px;color:#fff;font-family:'Liberation Mono',monospace;font-weight:bold;letter-spacing:.8px;transform:scaleY(.8);transform-origin:0 0;-webkit-text-stroke:.35px currentColor">B1</div><div class="t" style="left:827px;top:772px;font-size:12px;color:#fff;font-family:'Liberation Mono',monospace;font-weight:bold;letter-spacing:.8px;transform:scaleY(.8);transform-origin:0 0;-webkit-text-stroke:.35px currentColor">e0</div><div class="t" style="left:851px;top:772px;font-size:12px;color:#fff;font-family:'Liberation Mono',monospace;font-weight:bold;letter-spacing:.8px;transform:scaleY(.8);transform-origin:0 0;-webkit-text-stroke:.35px currentColor">7f</div><div class="t" style="left:875px;top:772px;font-size:12px;color:#fff;font-family:'Liberation Mono',monospace;font-weight:bold;letter-spacing:.8px;transform:scaleY(.8);transform-origin:0 0;-webkit-text-stroke:.35px currentColor">7f</div><div class="t" style="left:527px;top:782px;font-size:12px;color:#fff;font-family:'Liberation Mono',monospace;font-weight:bold;letter-spacing:.8px;transform:scaleY(.8);transform-origin:0 0;-webkit-text-stroke:.35px currentColor">461</div><div class="t" style="left:587px;top:782px;font-size:12px;color:#fff;font-family:'Liberation Mono',monospace;font-weight:bold;letter-spacing:.8px;transform:scaleY(.8);transform-origin:0 0;-webkit-text-stroke:.35px currentColor">0.0003</div><div class="t" style="left:707px;top:782px;font-size:12px;color:#fff;font-family:'Liberation Mono',monospace;font-weight:bold;letter-spacing:.8px;transform:scaleY(.8);transform-origin:0 0;-webkit-text-stroke:.35px currentColor">13</div><div class="t" style="left:757px;top:782px;font-size:12px;color:#fff;font-family:'Liberation Mono',monospace;font-weight:bold;letter-spacing:.8px;transform:scaleY(.8);transform-origin:0 0;-webkit-text-stroke:.35px currentColor">B1</div><div class="t" style="left:827px;top:782px;font-size:12px;color:#fff;font-family:'Liberation Mono',monospace;font-weight:bold;letter-spacing:.8px;transform:scaleY(.8);transform-origin:0 0;-webkit-text-stroke:.35px currentColor">e1</div><div class="t" style="left:851px;top:782px;font-size:12px;color:#fff;font-family:'Liberation Mono',monospace;font-weight:bold;letter-spacing:.8px;transform:scaleY(.8);transform-origin:0 0;-webkit-text-stroke:.35px currentColor">7f</div><div class="t" style="left:875px;top:782px;font-size:12px;color:#fff;font-family:'Liberation Mono',monospace;font-weight:bold;letter-spacing:.8px;transform:scaleY(.8);transform-origin:0 0;-webkit-text-stroke:.35px currentColor">7f</div><div class="t" style="left:527px;top:792px;font-size:12px;color:#fff;font-family:'Liberation Mono',monospace;font-weight:bold;letter-spacing:.8px;transform:scaleY(.8);transform-origin:0 0;-webkit-text-stroke:.35px currentColor">462</div><div class="t" style="left:587px;top:792px;font-size:12px;color:#fff;font-family:'Liberation Mono',monospace;font-weight:bold;letter-spacing:.8px;transform:scaleY(.8);transform-origin:0 0;-webkit-text-stroke:.35px currentColor">0.0003</div><div class="t" style="left:707px;top:792px;font-size:12px;color:#fff;font-family:'Liberation Mono',monospace;font-weight:bold;letter-spacing:.8px;transform:scaleY(.8);transform-origin:0 0;-webkit-text-stroke:.35px currentColor">14</div><div class="t" style="left:757px;top:792px;font-size:12px;color:#fff;font-family:'Liberation Mono',monospace;font-weight:bold;letter-spacing:.8px;transform:scaleY(.8);transform-origin:0 0;-webkit-text-stroke:.35px currentColor">B1</div><div class="t" style="left:827px;top:792px;font-size:12px;color:#fff;font-family:'Liberation Mono',monospace;font-weight:bold;letter-spacing:.8px;transform:scaleY(.8);transform-origin:0 0;-webkit-text-stroke:.35px currentColor">e2</div><div class="t" style="left:851px;top:792px;font-size:12px;color:#fff;font-family:'Liberation Mono',monospace;font-weight:bold;letter-spacing:.8px;transform:scaleY(.8);transform-origin:0 0;-webkit-text-stroke:.35px currentColor">7f</div><div class="t" style="left:875px;top:792px;font-size:12px;color:#fff;font-family:'Liberation Mono',monospace;font-weight:bold;letter-spacing:.8px;transform:scaleY(.8);transform-origin:0 0;-webkit-text-stroke:.35px currentColor">7f</div><div class="t" style="left:527px;top:802px;font-size:12px;color:#fff;font-family:'Liberation Mono',monospace;font-weight:bold;letter-spacing:.8px;transform:scaleY(.8);transform-origin:0 0;-webkit-text-stroke:.35px currentColor">463</div><div class="t" style="left:587px;top:802px;font-size:12px;color:#fff;font-family:'Liberation Mono',monospace;font-weight:bold;letter-spacing:.8px;transform:scaleY(.8);transform-origin:0 0;-webkit-text-stroke:.35px currentColor">0.0003</div><div class="t" style="left:707px;top:802px;font-size:12px;color:#fff;font-family:'Liberation Mono',monospace;font-weight:bold;letter-spacing:.8px;transform:scaleY(.8);transform-origin:0 0;-webkit-text-stroke:.35px currentColor">15</div><div class="t" style="left:757px;top:802px;font-size:12px;color:#fff;font-family:'Liberation Mono',monospace;font-weight:bold;letter-spacing:.8px;transform:scaleY(.8);transform-origin:0 0;-webkit-text-stroke:.35px currentColor">B1</div><div class="t" style="left:827px;top:802px;font-size:12px;color:#fff;font-family:'Liberation Mono',monospace;font-weight:bold;letter-spacing:.8px;transform:scaleY(.8);transform-origin:0 0;-webkit-text-stroke:.35px currentColor">e3</div><div class="t" style="left:851px;top:802px;font-size:12px;color:#fff;font-family:'Liberation Mono',monospace;font-weight:bold;letter-spacing:.8px;transform:scaleY(.8);transform-origin:0 0;-webkit-text-stroke:.35px currentColor">7f</div><div class="t" style="left:875px;top:802px;font-size:12px;color:#fff;font-family:'Liberation Mono',monospace;font-weight:bold;letter-spacing:.8px;transform:scaleY(.8);transform-origin:0 0;-webkit-text-stroke:.35px currentColor">7f</div><div style="left:527px;top:818px;width:8px;height:1px;background:#fff;"></div><div style="left:1276px;top:43px;width:6px;height:1007px;background:#2e2e2e;"></div><div style="left:1282px;top:43px;width:638px;height:992px;background:#c3c9c9;"></div><div class="t" style="left:1287px;top:55px;font-size:11.5px;color:#111;letter-spacing:-.4px">Filter:</div><div style="left:1320px;top:49px;width:516px;height:21px;background:#fff;border:1px solid #6f7777"></div><div style="left:1322px;top:51px;width:494px;height:17px;background:#d2d6d6;"></div><div class="t" style="left:1323px;top:53px;font-size:11.5px;color:#111;letter-spacing:-.4px">midi</div><svg style="left:1822px;top:57px" width="10" height="6"><path d="M0.5 0.5L5 5L9.5 0.5" stroke="#333" fill="none"/></svg><div style="left:1840px;top:49px;width:73px;height:21px;background:#dcdede;border:1px solid #b6bcbc"></div><div class="t" style="left:1852px;top:54px;font-size:11.5px;color:#111;letter-spacing:-.4px">Clear filter</div><div style="left:1287px;top:76px;width:205px;height:954px;background:#dcdfdf;border:1px solid #858a96"></div><div style="left:1288px;top:77px;width:185px;height:934px;overflow:hidden"><svg style="left:0;top:0" width="185" height="934"><path d="M13.5 14V940" stroke="#666" stroke-dasharray="1 1"/><path d="M32.5 17V153" stroke="#666" stroke-dasharray="1 1"/><path d="M32.5 193V940" stroke="#666" stroke-dasharray="1 1"/><path d="M33 25.5H41" stroke="#666" stroke-dasharray="1 1"/><path d="M33 41.5H41" stroke="#666" stroke-dasharray="1 1"/><path d="M33 57.5H41" stroke="#666" stroke-dasharray="1 1"/><path d="M33 73.5H41" stroke="#666" stroke-dasharray="1 1"/><path d="M33 89.5H41" stroke="#666" stroke-dasharray="1 1"/><path d="M33 105.5H41" stroke="#666" stroke-dasharray="1 1"/><path d="M33 121.5H41" stroke="#666" stroke-dasharray="1 1"/><path d="M33 137.5H41" stroke="#666" stroke-dasharray="1 1"/><path d="M33 153.5H41" stroke="#666" stroke-dasharray="1 1"/><path d="M33 201.5H41" stroke="#666" stroke-dasharray="1 1"/><path d="M33 217.5H41" stroke="#666" stroke-dasharray="1 1"/><path d="M33 233.5H41" stroke="#666" stroke-dasharray="1 1"/><path d="M33 249.5H41" stroke="#666" stroke-dasharray="1 1"/><path d="M33 265.5H41" stroke="#666" stroke-dasharray="1 1"/><path d="M33 281.5H41" stroke="#666" stroke-dasharray="1 1"/><path d="M33 297.5H41" stroke="#666" stroke-dasharray="1 1"/><path d="M33 313.5H41" stroke="#666" stroke-dasharray="1 1"/><path d="M33 329.5H41" stroke="#666" stroke-dasharray="1 1"/><path d="M33 345.5H41" stroke="#666" stroke-dasharray="1 1"/><path d="M33 361.5H41" stroke="#666" stroke-dasharray="1 1"/><path d="M33 377.5H41" stroke="#666" stroke-dasharray="1 1"/><path d="M33 393.5H41" stroke="#666" stroke-dasharray="1 1"/><path d="M33 409.5H41" stroke="#666" stroke-dasharray="1 1"/><path d="M33 425.5H41" stroke="#666" stroke-dasharray="1 1"/><path d="M33 441.5H41" stroke="#666" stroke-dasharray="1 1"/><path d="M33 457.5H41" stroke="#666" stroke-dasharray="1 1"/><path d="M33 473.5H41" stroke="#666" stroke-dasharray="1 1"/><path d="M33 489.5H41" stroke="#666" stroke-dasharray="1 1"/><path d="M33 505.5H41" stroke="#666" stroke-dasharray="1 1"/><path d="M33 521.5H41" stroke="#666" stroke-dasharray="1 1"/><path d="M33 537.5H41" stroke="#666" stroke-dasharray="1 1"/><path d="M33 553.5H41" stroke="#666" stroke-dasharray="1 1"/><path d="M33 569.5H41" stroke="#666" stroke-dasharray="1 1"/><path d="M33 585.5H41" stroke="#666" stroke-dasharray="1 1"/><path d="M33 601.5H41" stroke="#666" stroke-dasharray="1 1"/><path d="M33 617.5H41" stroke="#666" stroke-dasharray="1 1"/><path d="M33 633.5H41" stroke="#666" stroke-dasharray="1 1"/><path d="M33 649.5H41" stroke="#666" stroke-dasharray="1 1"/><path d="M33 665.5H41" stroke="#666" stroke-dasharray="1 1"/><path d="M33 681.5H41" stroke="#666" stroke-dasharray="1 1"/><path d="M33 697.5H41" stroke="#666" stroke-dasharray="1 1"/><path d="M33 713.5H41" stroke="#666" stroke-dasharray="1 1"/><path d="M33 729.5H41" stroke="#666" stroke-dasharray="1 1"/><path d="M33 745.5H41" stroke="#666" stroke-dasharray="1 1"/><path d="M33 761.5H41" stroke="#666" stroke-dasharray="1 1"/><path d="M33 777.5H41" stroke="#666" stroke-dasharray="1 1"/><path d="M33 793.5H41" stroke="#666" stroke-dasharray="1 1"/><path d="M33 809.5H41" stroke="#666" stroke-dasharray="1 1"/><path d="M33 825.5H41" stroke="#666" stroke-dasharray="1 1"/><path d="M33 841.5H41" stroke="#666" stroke-dasharray="1 1"/><path d="M33 857.5H41" stroke="#666" stroke-dasharray="1 1"/><path d="M33 873.5H41" stroke="#666" stroke-dasharray="1 1"/><path d="M33 889.5H41" stroke="#666" stroke-dasharray="1 1"/><path d="M33 905.5H41" stroke="#666" stroke-dasharray="1 1"/><path d="M33 921.5H41" stroke="#666" stroke-dasharray="1 1"/><path d="M33 937.5H41" stroke="#666" stroke-dasharray="1 1"/><path d="M18 9.5H23" stroke="#666" stroke-dasharray="1 1"/><path d="M18 169.5H23" stroke="#666" stroke-dasharray="1 1"/><path d="M18 185.5H23" stroke="#666" stroke-dasharray="1 1"/></svg><div style="left:9px;top:5px;width:9px;height:9px;background:#fff;border:1px solid #8a9a9a"></div><div style="left:11px;top:9px;width:5px;height:1px;background:#223;"></div><div style="left:9px;top:165px;width:9px;height:9px;background:#fff;border:1px solid #8a9a9a"></div><div style="left:11px;top:169px;width:5px;height:1px;background:#223;"></div><div style="left:13px;top:167px;width:1px;height:5px;background:#223;"></div><div style="left:9px;top:181px;width:9px;height:9px;background:#fff;border:1px solid #8a9a9a"></div><div style="left:11px;top:185px;width:5px;height:1px;background:#223;"></div><div style="left:23px;top:1px;width:52px;height:16px;background:#eceeee;"></div><div class="t" style="left:25px;top:4px;font-size:11.5px;color:#111;letter-spacing:-.4px">All Plugins</div><div class="t" style="left:44px;top:20px;font-size:11.5px;color:#111;letter-spacing:-.4px">New</div><div class="t" style="left:44px;top:36px;font-size:11.5px;color:#111;letter-spacing:-.4px">VST</div><div class="t" style="left:44px;top:52px;font-size:11.5px;color:#111;letter-spacing:-.4px">VSTi</div><div class="t" style="left:44px;top:68px;font-size:11.5px;color:#111;letter-spacing:-.4px">VST3</div><div class="t" style="left:44px;top:84px;font-size:11.5px;color:#111;letter-spacing:-.4px">VST3i</div><div class="t" style="left:44px;top:100px;font-size:11.5px;color:#111;letter-spacing:-.4px">JS</div><div class="t" style="left:44px;top:116px;font-size:11.5px;color:#111;letter-spacing:-.4px">Instruments</div><div class="t" style="left:44px;top:132px;font-size:11.5px;color:#111;letter-spacing:-.4px">Cockos</div><div class="t" style="left:44px;top:148px;font-size:11.5px;color:#111;letter-spacing:-.4px">Recently used</div><div class="t" style="left:25px;top:164px;font-size:11.5px;color:#111;letter-spacing:-.4px">Categories</div><div class="t" style="left:25px;top:180px;font-size:11.5px;color:#111;letter-spacing:-.4px">Developers</div><div class="t" style="left:44px;top:196px;font-size:11.5px;color:#111;letter-spacing:-.4px">112dB</div><div class="t" style="left:44px;top:212px;font-size:11.5px;color:#111;letter-spacing:-.4px">7Aliens</div><div class="t" style="left:44px;top:228px;font-size:11.5px;color:#111;letter-spacing:-.4px">[elogoxa]</div><div class="t" style="left:44px;top:244px;font-size:11.5px;color:#111;letter-spacing:-.4px">A.O.M.</div><div class="t" style="left:44px;top:260px;font-size:11.5px;color:#111;letter-spacing:-.4px">Abletunes</div><div class="t" style="left:44px;top:276px;font-size:11.5px;color:#111;letter-spacing:-.4px">Alan ViSTa</div><div class="t" style="left:44px;top:292px;font-size:11.5px;color:#111;letter-spacing:-.4px">AnalogObsession</div><div class="t" style="left:44px;top:308px;font-size:11.5px;color:#111;letter-spacing:-.4px">Applied Computer Music Tech</div><div class="t" style="left:44px;top:324px;font-size:11.5px;color:#111;letter-spacing:-.4px">apulSoft</div><div class="t" style="left:44px;top:340px;font-size:11.5px;color:#111;letter-spacing:-.4px">arcDev Noise Industries</div><div class="t" style="left:44px;top:356px;font-size:11.5px;color:#111;letter-spacing:-.4px">Arturia</div><div class="t" style="left:44px;top:372px;font-size:11.5px;color:#111;letter-spacing:-.4px">Audio Modeling</div><div class="t" style="left:44px;top:388px;font-size:11.5px;color:#111;letter-spacing:-.4px">Audiority</div><div class="t" style="left:44px;top:404px;font-size:11.5px;color:#111;letter-spacing:-.4px">bigcat</div><div class="t" style="left:44px;top:420px;font-size:11.5px;color:#111;letter-spacing:-.4px">Cherry Audio</div><div class="t" style="left:44px;top:436px;font-size:11.5px;color:#111;letter-spacing:-.4px">Cockos</div><div class="t" style="left:44px;top:452px;font-size:11.5px;color:#111;letter-spacing:-.4px">Creative Professional</div><div class="t" style="left:44px;top:468px;font-size:11.5px;color:#111;letter-spacing:-.4px">D16 Group Audio Software</div><div class="t" style="left:44px;top:484px;font-size:11.5px;color:#111;letter-spacing:-.4px">Denise</div><div class="t" style="left:44px;top:500px;font-size:11.5px;color:#111;letter-spacing:-.4px">DSK Music</div><div class="t" style="left:44px;top:516px;font-size:11.5px;color:#111;letter-spacing:-.4px">DSK MusicSZZ</div><div class="t" style="left:44px;top:532px;font-size:11.5px;color:#111;letter-spacing:-.4px">Exponential Audio</div><div class="t" style="left:44px;top:548px;font-size:11.5px;color:#111;letter-spacing:-.4px">FabFilter</div><div class="t" style="left:44px;top:564px;font-size:11.5px;color:#111;letter-spacing:-.4px">Fuse Audio Labs</div><div class="t" style="left:44px;top:580px;font-size:11.5px;color:#111;letter-spacing:-.4px">FXpansion</div><div class="t" style="left:44px;top:596px;font-size:11.5px;color:#111;letter-spacing:-.4px">HERCs Music Systems</div><div class="t" style="left:44px;top:612px;font-size:11.5px;color:#111;letter-spacing:-.4px">HGFortunex2</div><div class="t" style="left:44px;top:628px;font-size:11.5px;color:#111;letter-spacing:-.4px">Igor Nembrini</div><div class="t" style="left:44px;top:644px;font-size:11.5px;color:#111;letter-spacing:-.4px">IK Multimedia</div><div class="t" style="left:44px;top:660px;font-size:11.5px;color:#111;letter-spacing:-.4px">iZotope, Inc.</div><div class="t" style="left:44px;top:676px;font-size:11.5px;color:#111;letter-spacing:-.4px">Jacky Ligon</div><div class="t" style="left:44px;top:692px;font-size:11.5px;color:#111;letter-spacing:-.4px">Kazrog LLC</div><div class="t" style="left:44px;top:708px;font-size:11.5px;color:#111;letter-spacing:-.4px">Kimu</div><div class="t" style="left:44px;top:724px;font-size:11.5px;color:#111;letter-spacing:-.4px">Kjaerhus Audio</div><div class="t" style="left:44px;top:740px;font-size:11.5px;color:#111;letter-spacing:-.4px">Klevgrand</div><div class="t" style="left:44px;top:756px;font-size:11.5px;color:#111;letter-spacing:-.4px">Korneff Audio</div><div class="t" style="left:44px;top:772px;font-size:11.5px;color:#111;letter-spacing:-.4px">LIM</div><div class="t" style="left:44px;top:788px;font-size:11.5px;color:#111;letter-spacing:-.4px">LiquidSonics</div><div class="t" style="left:44px;top:804px;font-size:11.5px;color:#111;letter-spacing:-.4px">Maizesoft</div><div class="t" style="left:44px;top:820px;font-size:11.5px;color:#111;letter-spacing:-.4px">MeldaProduction</div><div class="t" style="left:44px;top:836px;font-size:11.5px;color:#111;letter-spacing:-.4px">Modartt</div><div class="t" style="left:44px;top:852px;font-size:11.5px;color:#111;letter-spacing:-.4px">Native Instruments</div><div class="t" style="left:44px;top:868px;font-size:11.5px;color:#111;letter-spacing:-.4px">Nembrini Audio</div><div class="t" style="left:44px;top:884px;font-size:11.5px;color:#111;letter-spacing:-.4px">Nomad Factory</div><div class="t" style="left:44px;top:900px;font-size:11.5px;color:#111;letter-spacing:-.4px">Oleg Sharonov</div><div class="t" style="left:44px;top:916px;font-size:11.5px;color:#111;letter-spacing:-.4px">Plug and Mix</div><div class="t" style="left:44px;top:932px;font-size:11.5px;color:#111;letter-spacing:-.4px">Plugin Alliance</div></div><div style="left:1473px;top:77px;width:18px;height:934px;background:#f0f0f0;"></div><div style="left:1474px;top:95px;width:15px;height:652px;background:#cdcdcd;"></div><svg style="left:1477px;top:84px" width="9" height="6"><path d="M0.5 5L4.5 1L8.5 5" stroke="#555" fill="none" stroke-width="1.3"/></svg><svg style="left:1477px;top:999px" width="9" height="6"><path d="M0.5 1L4.5 5L8.5 1" stroke="#555" fill="none" stroke-width="1.3"/></svg><div style="left:1288px;top:1011px;width:203px;height:18px;background:#f0f0f0;"></div><div style="left:1306px;top:1012px;width:113px;height:15px;background:#cdcdcd;"></div><svg style="left:1294px;top:1015px" width="6" height="9"><path d="M5 0.5L1 4.5L5 8.5" stroke="#555" fill="none" stroke-width="1.3"/></svg><svg style="left:1462px;top:1015px" width="6" height="9"><path d="M1 0.5L5 4.5L1 8.5" stroke="#555" fill="none" stroke-width="1.3"/></svg><div style="left:1496px;top:76px;width:417px;height:954px;background:#e0e2e2;border:1px solid #858a96"></div><div class="t" style="left:1500px;top:80px;font-size:11.5px;color:#111;letter-spacing:-.4px">VST: ReaControlMIDI (Cockos)</div><div class="t" style="left:1500px;top:94px;font-size:11.5px;color:#111;letter-spacing:-.4px">JS: Audio To MIDI Drum Trigger</div><div class="t" style="left:1500px;top:108px;font-size:11.5px;color:#111;letter-spacing:-.4px">JS: Loop Sampler w/MIDI Triggers</div><div class="t" style="left:1500px;top:122px;font-size:11.5px;color:#111;letter-spacing:-.4px">JS: MIDI Arpeggiator</div><div class="t" style="left:1500px;top:136px;font-size:11.5px;color:#111;letter-spacing:-.4px">JS: MIDI CC LFO Generator</div><div class="t" style="left:1500px;top:150px;font-size:11.5px;color:#111;letter-spacing:-.4px">JS: MIDI CC Mapper</div><div class="t" style="left:1500px;top:164px;font-size:11.5px;color:#111;letter-spacing:-.4px">JS: MIDI Choke</div><div class="t" style="left:1500px;top:178px;font-size:11.5px;color:#111;letter-spacing:-.4px">JS: MIDI Chord In Key</div><div class="t" style="left:1500px;top:192px;font-size:11.5px;color:#111;letter-spacing:-.4px">JS: MIDI Chorderizer</div><div class="t" style="left:1500px;top:206px;font-size:11.5px;color:#111;letter-spacing:-.4px">JS: MIDI Delay</div><div class="t" style="left:1500px;top:220px;font-size:11.5px;color:#111;letter-spacing:-.4px">JS: MIDI Duplicate Note Filter</div><div class="t" style="left:1500px;top:234px;font-size:11.5px;color:#111;letter-spacing:-.4px">JS: MIDI EQ Ducker</div><div class="t" style="left:1500px;top:248px;font-size:11.5px;color:#111;letter-spacing:-.4px">JS: MIDI Examiner</div><div class="t" style="left:1500px;top:262px;font-size:11.5px;color:#111;letter-spacing:-.4px">JS: MIDI Logger</div><div class="t" style="left:1500px;top:276px;font-size:11.5px;color:#111;letter-spacing:-.4px">JS: MIDI Map To Key</div><div class="t" style="left:1500px;top:290px;font-size:11.5px;color:#111;letter-spacing:-.4px">JS: MIDI Map To Key v2</div><div class="t" style="left:1500px;top:304px;font-size:11.5px;color:#111;letter-spacing:-.4px">JS: MIDI Modal Randomness</div><div class="t" style="left:1500px;top:318px;font-size:11.5px;color:#111;letter-spacing:-.4px">JS: MIDI Note Filter</div><div class="t" style="left:1500px;top:332px;font-size:11.5px;color:#111;letter-spacing:-.4px">JS: MIDI Note Hold</div><div class="t" style="left:1500px;top:346px;font-size:11.5px;color:#111;letter-spacing:-.4px">JS: MIDI Note Randomize</div><div class="t" style="left:1500px;top:360px;font-size:11.5px;color:#111;letter-spacing:-.4px">JS: MIDI Note Repeater</div><div class="t" style="left:1500px;top:374px;font-size:11.5px;color:#111;letter-spacing:-.4px">JS: MIDI note sanitizer</div><div class="t" style="left:1500px;top:388px;font-size:11.5px;color:#111;letter-spacing:-.4px">JS: MIDI Note-On Delay</div><div class="t" style="left:1500px;top:402px;font-size:11.5px;color:#111;letter-spacing:-.4px">JS: MIDI Pattern/Scale Variation Generator</div><div class="t" style="left:1500px;top:416px;font-size:11.5px;color:#111;letter-spacing:-.4px">JS: MIDI Pitch Wheel LFO</div><div class="t" style="left:1500px;top:430px;font-size:11.5px;color:#111;letter-spacing:-.4px">JS: MIDI Program/Bank Switch on Load</div><div class="t" style="left:1500px;top:444px;font-size:11.5px;color:#111;letter-spacing:-.4px">JS: MIDI Route Note To Channel</div><div class="t" style="left:1500px;top:458px;font-size:11.5px;color:#111;letter-spacing:-.4px">JS: MIDI Router/Transpose</div><div class="t" style="left:1500px;top:472px;font-size:11.5px;color:#111;letter-spacing:-.4px">JS: MIDI Sequencer Baby</div><div class="t" style="left:1500px;top:486px;font-size:11.5px;color:#111;letter-spacing:-.4px">JS: MIDI Sequencer Baby v2</div><div class="t" style="left:1500px;top:500px;font-size:11.5px;color:#111;letter-spacing:-.4px">JS: MIDI Sequencer Megababy</div><div class="t" style="left:1500px;top:514px;font-size:11.5px;color:#111;letter-spacing:-.4px">JS: MIDI Snap To Key</div><div class="t" style="left:1500px;top:528px;font-size:11.5px;color:#111;letter-spacing:-.4px">JS: MIDI Super Arpeggiator (GUI version)</div><div class="t" style="left:1500px;top:542px;font-size:11.5px;color:#111;letter-spacing:-.4px">JS: MIDI Tool</div><div class="t" style="left:1500px;top:556px;font-size:11.5px;color:#111;letter-spacing:-.4px">JS: MIDI Tool v2</div><div class="t" style="left:1500px;top:570px;font-size:11.5px;color:#111;letter-spacing:-.4px">JS: MIDI Transpose Notes</div><div class="t" style="left:1500px;top:584px;font-size:11.5px;color:#111;letter-spacing:-.4px">JS: MIDI Velocity and Timing Humanizer</div><div class="t" style="left:1500px;top:598px;font-size:11.5px;color:#111;letter-spacing:-.4px">JS: MIDI Velocity Control</div><div class="t" style="left:1500px;top:612px;font-size:11.5px;color:#111;letter-spacing:-.4px">JS: MIDI Velocity Scaler/Compressor</div><div class="t" style="left:1500px;top:626px;font-size:11.5px;color:#111;letter-spacing:-.4px">JS: MIDI Velocity Variation Generator</div><div class="t" style="left:1500px;top:640px;font-size:11.5px;color:#111;letter-spacing:-.4px">JS: midi/Arpeggiator_functions.py</div><div class="t" style="left:1500px;top:654px;font-size:11.5px;color:#111;letter-spacing:-.4px">JS: midi/ArpeggiatorGUI.py</div><div class="t" style="left:1500px;top:668px;font-size:11.5px;color:#111;letter-spacing:-.4px">JS: midi/MIDI_Super_Arpeggiator/Major.txt</div><div class="t" style="left:1500px;top:682px;font-size:11.5px;color:#111;letter-spacing:-.4px">JS: midi/MIDI_Super_Arpeggiator/Minor.txt</div><div class="t" style="left:1500px;top:696px;font-size:11.5px;color:#111;letter-spacing:-.4px">JS: midi/MIDI_Super_Arpeggiator/Nice.txt</div><div class="t" style="left:1500px;top:710px;font-size:11.5px;color:#111;letter-spacing:-.4px">JS: Super8 MIDI-controlled synchronized looper (Cockos)</div><div style="left:1276px;top:1035px;width:644px;height:14px;background:#3a3a3a;"></div><svg style="left:0;top:0" width="1920" height="1080"><path d="M1286 1035H1382L1377 1048H1292Z" fill="#c0caca" stroke="#5a6262" stroke-width=".8"/><path d="M1379 1048L1384 1035H1485L1480 1048Z" fill="#9aa5a5" stroke="#5a6262" stroke-width=".8"/><path d="M1478 1048L1483 1035H1581L1575 1048Z" fill="#9aa5a5" stroke="#5a6262" stroke-width=".8"/><path d="M1573 1048L1578 1035H1671L1664 1048Z" fill="#9aa5a5" stroke="#5a6262" stroke-width=".8"/></svg><svg style="left:1297px;top:1038px" width="9" height="9"><rect x="0.5" y="0.5" width="8" height="8" fill="none" stroke="#444"/><path d="M2 2L7 7M7 2L2 7" stroke="#444"/></svg><div class="t" style="left:1310px;top:1037px;font-size:11px;color:#2a2a2a;font-weight:bold;letter-spacing:.2px">FX Browser</div><svg style="left:1390px;top:1038px" width="9" height="9"><rect x="0.5" y="0.5" width="8" height="8" fill="none" stroke="#444"/><path d="M2 2L7 7M7 2L2 7" stroke="#444"/></svg><div class="t" style="left:1403px;top:1037px;font-size:11px;color:#3a4444;font-weight:normal;letter-spacing:-.1px">Media Explorer</div><svg style="left:1488px;top:1038px" width="9" height="9"><rect x="0.5" y="0.5" width="8" height="8" fill="none" stroke="#444"/><path d="M2 2L7 7M7 2L2 7" stroke="#444"/></svg><div class="t" style="left:1501px;top:1037px;font-size:11px;color:#3a4444;font-weight:normal;letter-spacing:-.1px">Project Bay 1</div><svg style="left:1585px;top:1038px" width="9" height="9"><rect x="0.5" y="0.5" width="8" height="8" fill="none" stroke="#444"/><path d="M2 2L7 7M7 2L2 7" stroke="#444"/></svg><div class="t" style="left:1598px;top:1037px;font-size:11px;color:#3a4444;font-weight:normal;letter-spacing:-.1px">Performance</div><div class="t" style="left:1285px;top:1036px;font-size:10px;color:#e0e0e0;font-weight:bold">!</div><div style="left:0px;top:1006px;width:1276px;height:43px;background:linear-gradient(#3b3b3b,#333 20%,#303030);border-top:1px solid #474747"></div><div style="left:5px;top:1011px;width:59px;height:32px;background:#333;border:1px solid #222;box-shadow:inset 0 1px 0 #444, 0 1px 0 #444;border-radius:2px"></div><div class="t" style="left:9px;top:1015px;font-size:7.5px;color:#a8b0b0;font-weight:bold;letter-spacing:-.15px">GLOBAL AUTO</div><div style="left:9px;top:1027px;width:52px;height:12px;background:#3a3a3a;border:1px solid #252525;border-radius:2px"></div><div style="left:10px;top:1028px;width:14px;height:10px;background:#444;border-right:1px solid #252525"></div><svg style="left:11px;top:1029px" width="12" height="8"><path d="M1 7L6 2L11 7" stroke="#777" fill="none"/></svg><div class="t" style="left:29px;top:1029px;font-size:9px;color:#6f7777;font-weight:bold">NONE</div><div style="left:72px;top:1011px;width:297px;height:32px;background:linear-gradient(#3a3a3a,#2d2d2d);border:1px solid #1e1e1e;border-radius:2px;box-shadow:0 1px 0 #474747"></div><div class="t" style="left:136px;top:1017px;font-size:20.5px;color:#a3b0b8;font-weight:bold;letter-spacing:.45px">1.1.00 / 0:00.000</div><div class="t" style="left:302px;top:1018px;font-size:16px;color:#a3b0b8;letter-spacing:-.6px">[Stopped]</div><div style="left:377px;top:1012px;width:146px;height:30px;background:linear-gradient(#4a4a4a,#303030 50%,#262626);border:1px solid #151515;border-radius:15px;box-shadow:0 1px 1px #555"></div><div style="left:405px;top:1013px;width:1px;height:28px;background:#111;"></div><div style="left:435px;top:1013px;width:1px;height:28px;background:#111;"></div><div style="left:465px;top:1013px;width:1px;height:28px;background:#111;"></div><div style="left:495px;top:1013px;width:1px;height:28px;background:#111;"></div><svg style="left:385px;top:1019px" width="14" height="14"><rect x="1" y="2" width="3" height="10" fill="#a8a8a8"/><path d="M13 2V12L4 7z" fill="#a8a8a8"/></svg><div style="left:414px;top:1020px;width:12px;height:12px;background:#a8a8a8;"></div><svg style="left:443px;top:1019px" width="14" height="14"><path d="M1 2V12L13 7z" fill="#a8a8a8"/></svg><div style="left:474px;top:1020px;width:4px;height:12px;background:#a8a8a8;"></div><div style="left:481px;top:1020px;width:4px;height:12px;background:#a8a8a8;"></div><svg style="left:502px;top:1019px" width="14" height="14"><path d="M1 2V12L10 7z" fill="#a8a8a8"/><rect x="10" y="2" width="3" height="10" fill="#a8a8a8"/></svg><div style="left:527px;top:1012px;width:30px;height:30px;border-radius:50%;background:radial-gradient(circle at 50% 30%,#8a4545,#5e2626 55%,#3e1616);border:1px solid #151515"></div><div style="left:536px;top:1021px;width:12px;height:12px;border-radius:50%;border:2.5px solid #dcc0c0"></div><div style="left:561px;top:1012px;width:30px;height:30px;border-radius:50%;background:linear-gradient(#4a4a4a,#2a2a2a);border:1px solid #151515"></div><svg style="left:567px;top:1018px" width="18" height="18"><path d="M4 9a5 5 0 0 1 9-3M14 9a5 5 0 0 1-9 3" stroke="#bbb" stroke-width="1.8" fill="none"/><path d="M14 3v4h-4z M4 15v-4h4z" fill="#bbb"/></svg><div style="left:599px;top:1011px;width:43px;height:32px;background:linear-gradient(#3a3a3a,#2e2e2e);border:1px solid #1c1c1c;border-radius:2px"></div><div class="t" style="left:607px;top:1015px;font-size:10.5px;color:#a3b0b8;">BPM</div><div class="t" style="left:614px;top:1029px;font-size:10.5px;color:#a3b0b8;">60</div><div style="left:650px;top:1011px;width:31px;height:32px;background:linear-gradient(#3a3a3a,#2e2e2e);border:1px solid #1c1c1c;border-radius:2px"></div><div class="t" style="left:656px;top:1021px;font-size:10.5px;color:#a3b0b8;">4/4</div><div style="left:689px;top:1011px;width:166px;height:15px;background:#353535;border:1px solid #1c1c1c;border-radius:2px"></div><div style="left:718px;top:1012px;width:136px;height:13px;background:#2c2c2c;"></div><div class="t" style="left:692px;top:1013px;font-size:10.5px;color:#b0b8c0;">Rate:</div><div class="t" style="left:778px;top:1013px;font-size:10.5px;color:#b0b8c0;">1.0</div><div style="left:689px;top:1027px;width:166px;height:16px;background:#323232;border:1px solid #1c1c1c;border-radius:2px"></div><div style="left:699px;top:1034px;width:146px;height:1px;background:#555;"></div><div style="left:759px;top:1028px;width:25px;height:14px;background:linear-gradient(90deg,#cfcfcf,#f4f4f4 40%,#dcdcdc 60%,#bdbdbd);border-radius:2px"></div><div style="left:771px;top:1031px;width:1px;height:8px;background:#222;"></div><div style="left:1046px;top:1020px;width:218px;height:16px;background:#303030;border:1px solid #1c1c1c;border-radius:2px;box-shadow:0 1px 0 #444"></div><div style="left:1091px;top:1021px;width:172px;height:14px;background:#2a2a2a;"></div><div style="left:1090px;top:1021px;width:1px;height:14px;background:#1a1a1a;"></div><div style="left:1091px;top:1021px;width:1px;height:14px;background:#3a3a3a;"></div><div style="left:1148px;top:1021px;width:1px;height:14px;background:#1a1a1a;"></div><div style="left:1149px;top:1021px;width:1px;height:14px;background:#3a3a3a;"></div><div style="left:1206px;top:1021px;width:1px;height:14px;background:#1a1a1a;"></div><div style="left:1207px;top:1021px;width:1px;height:14px;background:#3a3a3a;"></div><div class="t" style="left:1049px;top:1023px;font-size:10.5px;color:#b0b8c0;letter-spacing:-.2px">Selection:</div><div class="t" style="left:1106px;top:1023px;font-size:10.5px;color:#b0b8c0;">1.1.00</div><div class="t" style="left:1164px;top:1023px;font-size:10.5px;color:#b0b8c0;">1.1.00</div><div class="t" style="left:1221px;top:1023px;font-size:10.5px;color:#b0b8c0;">0.0.00</div><div style="left:0px;top:1050px;width:1920px;height:30px;background:#171c25;"></div><svg style="left:9px;top:1056px" width="17" height="17"><path d="M0 2.5L7 1.5V8H0zM8 1.3L17 0V8H8zM0 9H7V15.5L0 14.5zM8 9H17V17L8 15.7z" fill="#fff"/></svg><svg style="left:48px;top:1056px" width="18" height="18"><circle cx="9" cy="9" r="8.5" fill="#fff"/><path d="M5 3.5L9 9.5V15M13 3.5L9 9.5" stroke="#f03030" stroke-width="2.5" fill="none"/></svg><svg style="left:85px;top:1056px" width="18" height="18"><path d="M1 2h6l2 2h8v12H1z" fill="#f0c040"/><path d="M1 6h16v10H1z" fill="#fbe08a"/><path d="M5 16v-5h8v5h-2.5v-2.5h-3V16z" fill="#3aa8f0"/></svg><div style="left:113px;top:1050px;width:36px;height:30px;background:#3b424c;"></div><div style="left:113px;top:1078px;width:36px;height:2px;background:#76b9ed;"></div><svg style="left:122px;top:1056px" width="18" height="18"><g transform="translate(-1.5,-1.5)"><path d="M3.6 7.2 A7.6 7.6 0 0 1 17.4 10.2" stroke="#2a90d0" stroke-width="2" fill="none"/><path d="M2.3 8 Q2.8 14.5 9 18.8 Q10.6 15 8.6 11.5 Q5.8 7.8 2.3 8 Z" fill="#5ab82a"/><path d="M8 7 Q14 6.6 17 10.2 Q16 15.5 9.8 18.8 Q11.8 13 8 7Z" fill="#b46452"/></g></svg><svg style="left:612px;top:1055px" width="18" height="18"><circle cx="9" cy="5" r="3.5" fill="#8a5a3a"/><path d="M3 17Q3 9 9 9Q15 9 15 17z" fill="#3a8a5a"/></svg><svg style="left:636px;top:1055px" width="18" height="18"><rect x="1" y="2" width="16" height="11" fill="#3aa0e8"/><rect x="6" y="14" width="6" height="2" fill="#ccc"/><rect x="3" y="16" width="12" height="1.5" fill="#ccc"/></svg><svg style="left:659px;top:1055px" width="18" height="18"><path d="M1 2h6l2 2h8v12H1z" fill="#f0c040"/><path d="M1 6h16v10H1z" fill="#fbe08a"/><path d="M5 16v-5h8v5h-2.5v-2.5h-3V16z" fill="#3aa8f0"/></svg><svg style="left:682px;top:1055px" width="18" height="18"><circle cx="12" cy="6" r="5" fill="#3a80d0"/><rect x="1" y="8" width="11" height="7" fill="#4ab0f0"/><rect x="5" y="15" width="3" height="2" fill="#ccc"/></svg><svg style="left:705px;top:1055px" width="18" height="18"><rect x="1" y="3" width="16" height="12" fill="#4a90d8"/><rect x="2" y="4" width="14" height="10" fill="#cde4f6"/><circle cx="6" cy="8" r="2.5" fill="#e8a030"/><rect x="10" y="6" width="5" height="2" fill="#4a90d8"/><rect x="3" y="12" width="12" height="1.5" fill="#4a90d8"/></svg><svg style="left:728px;top:1055px" width="18" height="18"><path d="M3 3h12l-1.5 14h-9z" fill="#9aa4a8"/><rect x="2" y="2" width="14" height="2" fill="#b8c0c4"/><path d="M7 10l2-3 2 3M6.5 12h5" stroke="#3a9ad8" stroke-width="1.3" fill="none"/></svg><svg style="left:751px;top:1055px" width="18" height="18"><rect x="1" y="3" width="16" height="12" fill="#4a90d8"/><rect x="2" y="4" width="14" height="10" fill="#cde4f6"/><circle cx="6" cy="8" r="2.5" fill="#e8a030"/><rect x="10" y="6" width="5" height="2" fill="#4a90d8"/><rect x="3" y="12" width="12" height="1.5" fill="#4a90d8"/></svg><svg style="left:774px;top:1055px" width="18" height="18"><rect x="1" y="2" width="16" height="13" fill="#5a7a9a"/><rect x="2" y="3" width="14" height="11" fill="#a8c8e0"/><circle cx="8" cy="8" r="3" fill="#fff"/><path d="M11 12l4 4" stroke="#888" stroke-width="2"/></svg><svg style="left:797px;top:1055px" width="18" height="18"><rect x="1" y="1" width="16" height="16" fill="#fff"/><path d="M2 2h6v5H2z" fill="#e03030"/><path d="M11 2h5v9h-5z" fill="#f0a020"/><path d="M5 12h11v4H5z" fill="#30a030"/><path d="M2 8h3v8H2z" fill="#3050d0"/></svg><svg style="left:820px;top:1055px" width="18" height="18"><g transform="translate(-1.5,-1.5)"><path d="M3.6 7.2 A7.6 7.6 0 0 1 17.4 10.2" stroke="#2a90d0" stroke-width="2" fill="none"/><path d="M2.3 8 Q2.8 14.5 9 18.8 Q10.6 15 8.6 11.5 Q5.8 7.8 2.3 8 Z" fill="#5ab82a"/><path d="M8 7 Q14 6.6 17 10.2 Q16 15.5 9.8 18.8 Q11.8 13 8 7Z" fill="#b46452"/></g></svg><svg style="left:843px;top:1055px" width="18" height="18"><rect x="1" y="1" width="16" height="16" rx="2" fill="#d8dce0"/><path d="M1 8Q5 4 9 8T17 8v4Q13 8 9 12T1 12z" fill="#6a7a8a"/></svg><svg style="left:866px;top:1055px" width="18" height="18"><rect x="1" y="1" width="16" height="16" fill="#2a3a4a" stroke="#3ab0e0"/><rect x="3" y="6" width="12" height="6" fill="#888"/><rect x="6" y="7" width="6" height="4" fill="#333"/></svg><svg style="left:889px;top:1055px" width="18" height="18"><path d="M3 1h12v16H3z" fill="#e8c050"/><g fill="#fff"><rect x="6" y="4" width="3" height="3"/><rect x="10" y="4" width="3" height="3"/><rect x="6" y="8" width="3" height="3"/><rect x="10" y="8" width="3" height="3"/></g></svg><svg style="left:912px;top:1055px" width="18" height="18"><circle cx="9" cy="9" r="8" fill="#4ab040"/><path d="M6 5v5a3 3 0 0 0 6 0V5" stroke="#fff" stroke-width="2.2" fill="none"/></svg><svg style="left:935px;top:1055px" width="18" height="18"><rect x="0" y="1" width="18" height="16" rx="2" fill="#0a2238"/><text x="1.5" y="13" font-size="9" font-weight="bold" fill="#3ab0f0" font-family="Liberation Sans">Lrc</text></svg><svg style="left:958px;top:1055px" width="18" height="18"><rect x="0" y="1" width="18" height="16" rx="2" fill="#1a0a3a"/><text x="2.5" y="13" font-size="10" font-weight="bold" fill="#9a9aff" font-family="Liberation Sans">Pr</text></svg><svg style="left:981px;top:1055px" width="18" height="18"><rect x="0" y="0" width="18" height="18" fill="#000" stroke="#fff" stroke-width="1.5"/><path d="M4 5h10M9 5v10M4 9h10" stroke="#fff" stroke-width="1.5"/><text x="11" y="16" font-size="7" fill="#fff" font-family="Liberation Sans">2</text></svg><svg style="left:1004px;top:1055px" width="18" height="18"><rect x="0" y="0" width="18" height="18" rx="3" fill="#2a2a3a" stroke="#8a6ad8"/><circle cx="9" cy="6" r="2.5" fill="#f0a030"/><circle cx="6" cy="11" r="2.5" fill="#3ac0e0"/><circle cx="12" cy="11" r="2.5" fill="#e03a6a"/></svg><svg style="left:1027px;top:1055px" width="18" height="18"><circle cx="9" cy="9" r="7.5" fill="none" stroke="#ccc" stroke-width="1.6"/><path d="M5 11l8-4M6 7l6 0M6 12h6" stroke="#ccc" stroke-width="1.3"/></svg><svg style="left:1050px;top:1055px" width="18" height="18"><path d="M1 6l8 3-8 3zM17 6l-8 3 8 3z" fill="#d8b050"/><rect x="1" y="8" width="16" height="2" fill="#888"/></svg><svg style="left:1073px;top:1055px" width="18" height="18"><rect x="0" y="0" width="18" height="18" rx="4" fill="#4aa8f0"/><rect x="3" y="6" width="9" height="7" rx="1.5" fill="#fff"/><path d="M12 9l4-3v7z" fill="#fff"/></svg><svg style="left:1096px;top:1055px" width="18" height="18"><g transform="translate(-1.5,-1.5)"><path d="M3.6 7.2 A7.6 7.6 0 0 1 17.4 10.2" stroke="#2a90d0" stroke-width="2" fill="none"/><path d="M2.3 8 Q2.8 14.5 9 18.8 Q10.6 15 8.6 11.5 Q5.8 7.8 2.3 8 Z" fill="#5ab82a"/><path d="M8 7 Q14 6.6 17 10.2 Q16 15.5 9.8 18.8 Q11.8 13 8 7Z" fill="#b46452"/></g></svg><svg style="left:1119px;top:1055px" width="18" height="18"><rect x="0" y="0" width="18" height="18" fill="#3a6ae8"/><path d="M5 4l4 10 4-10" stroke="#fff" stroke-width="2.5" fill="none"/></svg><svg style="left:1142px;top:1055px" width="18" height="18"><circle cx="9" cy="9" r="8.5" fill="#fff"/><path d="M5 3.5L9 9.5V15M13 3.5L9 9.5" stroke="#f03030" stroke-width="2.5" fill="none"/></svg><svg style="left:1165px;top:1055px" width="18" height="18"><rect x="1" y="1" width="16" height="16" fill="#fff"/><path d="M1 1h7v4H1z" fill="#3ab0e0"/><path d="M9 13h8v4H9z" fill="#60c040"/><path d="M4 4l10 10M14 4L4 14" stroke="#30a070" stroke-width="2.5"/></svg><svg style="left:1188px;top:1055px" width="18" height="18"><rect x="0" y="0" width="18" height="18" rx="4" fill="#6a7ae0"/><circle cx="6" cy="6" r="2" fill="#fff"/><circle cx="12" cy="12" r="2" fill="#fff"/><path d="M11 4a5 5 0 0 1 3 4M7 14a5 5 0 0 1-3-4" stroke="#fff" fill="none" stroke-width="1.3"/></svg><svg style="left:1211px;top:1055px" width="18" height="18"><rect x="0" y="0" width="18" height="18" fill="#4a5050"/><circle cx="9" cy="9" r="6" fill="none" stroke="#ddd" stroke-width="1.5"/><path d="M5 11l8-5" stroke="#ddd" stroke-width="1.5"/></svg><svg style="left:1235px;top:1055px" width="18" height="18"><path d="M9 0.5l7.5 4.2v8.6L9 17.5 1.5 13.3V4.7z" fill="#1a70d8"/><path d="M6 5v5a3 3 0 0 0 6 0V5" stroke="#fff" stroke-width="2" fill="none"/></svg><svg style="left:1257px;top:1055px" width="18" height="18"><rect x="0" y="0" width="18" height="18" rx="2" fill="#0a1020"/><path d="M3 14L8 6l3 6M8 10l7-5M10 9l5 5" stroke="#d8b870" stroke-width="1.3" fill="none"/></svg><svg style="left:1279px;top:1055px" width="18" height="18"><rect x="0" y="0" width="18" height="18" fill="#5a7090"/><path d="M4 2v14M8 2v14M12 2v14" stroke="#3a9ae0" stroke-width="1.5"/><path d="M2 6l3-1M6 10l3-1M10 7l3-1" stroke="#fff"/></svg><svg style="left:1302px;top:1055px" width="18" height="18"><rect x="0" y="0" width="18" height="18" fill="#1a4a8a"/><g fill="#fff"><rect x="3" y="3" width="3" height="3"/><rect x="8" y="3" width="3" height="3"/><rect x="13" y="3" width="3" height="3"/></g><rect x="1" y="12" width="16" height="4" fill="#cde"/></svg><svg style="left:1325px;top:1055px" width="18" height="18"><rect x="0" y="0" width="18" height="18" fill="#2a5a9a"/><rect x="1" y="8" width="16" height="8" fill="#fff"/><g fill="#222"><rect x="3" y="8" width="1.5" height="5"/><rect x="7" y="8" width="1.5" height="5"/><rect x="11" y="8" width="1.5" height="5"/><rect x="14" y="8" width="1.5" height="5"/></g></svg><svg style="left:1348px;top:1055px" width="18" height="18"><rect x="0" y="0" width="18" height="18" fill="#1a1a1a"/><path d="M4 5v9M8 5v9M12 5v9" stroke="#aaa"/><circle cx="13" cy="13" r="3.5" fill="#3a8ae0"/></svg><div style="left:1700px;top:1055px;width:16px;height:16px;background:#1f2a1f;"></div><svg style="left:1702px;top:1059px" width="12" height="8"><path d="M1 4Q6 -1 11 4Q6 9 1 4z" fill="none" stroke="#76b900" stroke-width="1.5"/></svg><svg style="left:1726px;top:1056px" width="14" height="17"><rect x="2" y="4" width="6" height="12" fill="none" stroke="#fff"/><rect x="3" y="1" width="4" height="3" fill="none" stroke="#fff"/><path d="M8 14l2 2 3-4" stroke="#ccc" fill="none"/></svg><svg style="left:1748px;top:1057px" width="16" height="14"><rect x="3" y="2" width="12" height="8" fill="none" stroke="#fff"/><path d="M9 10v3M5 13h8" stroke="#fff"/><rect x="0" y="0" width="4" height="4" fill="none" stroke="#fff"/></svg><svg style="left:1772px;top:1057px" width="18" height="14"><path d="M1 5h3l4-4v12l-4-4H1z" fill="none" stroke="#fff"/><path d="M11 4q2 3 0 6M13.5 2q3.5 5 0 10" stroke="#fff" fill="none"/></svg><div class="t" style="left:1798px;top:1059px;font-size:12px;color:#fff;letter-spacing:-.2px">ENG</div><div class="t" style="left:1834px;top:1059px;font-size:12px;color:#fff;letter-spacing:-.3px">16:34</div><svg style="left:1879px;top:1056px" width="17" height="17"><path d="M1 1h15v11H9l-2 3-2-3H1z" fill="none" stroke="#fff"/></svg><div style="left:1915px;top:1050px;width:1px;height:30px;background:#555;"></div>
</body></html>
